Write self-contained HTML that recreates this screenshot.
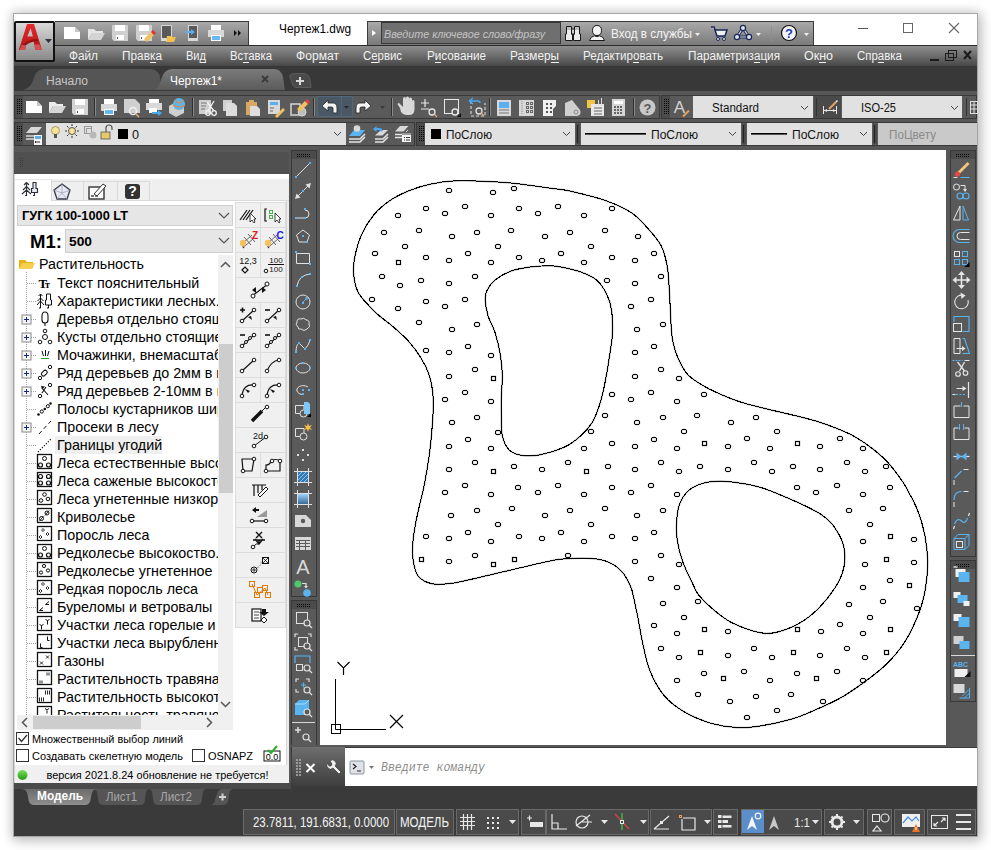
<!DOCTYPE html><html><head><meta charset="utf-8"><style>
*{margin:0;padding:0}
html,body{width:991px;height:850px;overflow:hidden;background:#fff;font-family:"Liberation Sans",sans-serif}
#sh{position:absolute;left:13px;top:13px;width:965px;height:824px;background:#3c3c3c;box-shadow:0 0 10px 2px rgba(0,0,0,0.16),3px 4px 12px 1px rgba(0,0,0,0.14);border:1px solid #a6a6a6;box-sizing:border-box}
</style></head><body><div id="sh"></div><svg width="991" height="850" viewBox="0 0 991 850" style="position:absolute;left:0;top:0"><defs><linearGradient id="g1" x1="0" y1="0" x2="0" y2="1"><stop offset="0" stop-color="#ababab"/><stop offset="1" stop-color="#7a7a7a"/></linearGradient><linearGradient id="g2" x1="0" y1="0" x2="0" y2="1"><stop offset="0" stop-color="#ababab"/><stop offset="1" stop-color="#7a7a7a"/></linearGradient><linearGradient id="g3" x1="0" y1="0" x2="0" y2="1"><stop offset="0" stop-color="#929292"/><stop offset="0.55" stop-color="#6a6a6a"/><stop offset="1" stop-color="#474747"/></linearGradient><linearGradient id="g4" x1="0" y1="0" x2="0" y2="1"><stop offset="0" stop-color="#7b7b7b"/><stop offset="1" stop-color="#5a5a5a"/></linearGradient><linearGradient id="g5" x1="0" y1="0" x2="0" y2="1"><stop offset="0" stop-color="#d9d9d9"/><stop offset="1" stop-color="#8a8a8a"/></linearGradient><linearGradient id="g6" x1="0" y1="0" x2="0" y2="1"><stop offset="0" stop-color="#e42a2a"/><stop offset="0.6" stop-color="#c81e1e"/><stop offset="1" stop-color="#b01515"/></linearGradient><linearGradient id="g7" x1="0" y1="0" x2="0" y2="1"><stop offset="0" stop-color="#7ee060"/><stop offset="1" stop-color="#1f9a10"/></linearGradient><linearGradient id="g8" x1="0" y1="0" x2="0" y2="1"><stop offset="0" stop-color="#9ad4f8"/><stop offset="1" stop-color="#3a6a98"/></linearGradient><linearGradient id="g9" x1="0" y1="0" x2="0" y2="1"><stop offset="0" stop-color="#6e6e6e"/><stop offset="1" stop-color="#3e3e3e"/></linearGradient><linearGradient id="g10" x1="0" y1="0" x2="0" y2="1"><stop offset="0" stop-color="#6c6c6c"/><stop offset="1" stop-color="#8e8e8e"/></linearGradient></defs><rect x="14" y="14" width="963" height="31" fill="#ffffff" /><rect x="55" y="21" width="194" height="24" fill="url(#g1)" /><line x1="55" y1="21.5" x2="249" y2="21.5" stroke="#3a3a3a" stroke-width="1"/><line x1="248.5" y1="21" x2="248.5" y2="45" stroke="#3a3a3a" stroke-width="1"/><path d="M64 27 H75 L80 32 V39 H64 Z" fill="#ffffff" stroke="none" stroke-width="1" /><path d="M75 27 L80 32 H75 Z" fill="#c8c8c8" stroke="none" stroke-width="1" /><path d="M88 29 H94 L96 31 H103 V33 H92 L88 40 Z" fill="#e6e6e6" stroke="none" stroke-width="1" /><path d="M92 33 H105 L101 40 H88 Z" fill="#d4d4d4" stroke="none" stroke-width="1" /><path d="M112 25 H128 V41 H114 L112 39 Z" fill="#d0d0d0" stroke="none" stroke-width="1" /><rect x="115" y="25" width="10" height="6" fill="#ffffff" /><rect x="116" y="35" width="8" height="5" fill="#ffffff" /><rect x="117" y="37" width="1" height="2" fill="#555" /><path d="M136 25 H152 V41 H138 L136 39 Z" fill="#d0d0d0" stroke="none" stroke-width="1" /><rect x="139" y="25" width="10" height="6" fill="#ffffff" /><rect x="140" y="35" width="8" height="5" fill="#ffffff" /><rect x="141" y="37" width="1" height="2" fill="#555" /><path d="M144 39 L151 32 L154 35 L147 42 Z" fill="#f0c060" stroke="none" stroke-width="1" /><path d="M151 32 L153 30 L156 33 L154 35 Z" fill="#e03030" stroke="none" stroke-width="1" /><path d="M161 25 h10 a1 1 0 0 1 1 1 v15 h-11 z" fill="#d8d8d8" stroke="none" stroke-width="1" /><rect x="162" y="26" width="9" height="12" fill="#5a5a5a" /><path d="M167 36 h4 l1 1 h4 l-2 5 h-8 z" fill="#f0c050" stroke="none" stroke-width="1" /><path d="M188 25 h10 v16 h-10 z" fill="#d8d8d8" stroke="none" stroke-width="1" /><rect x="189" y="26" width="8" height="12" fill="#5a5a5a" /><path d="M185 31 h6 v-2 l4 3 l-4 3 v-2 h-6 z" fill="#5ab0f0" stroke="none" stroke-width="1" /><rect x="211" y="25" width="10" height="5" fill="#ffffff" /><rect x="208" y="30" width="16" height="7" fill="#d8d8d8" /><rect x="211" y="35" width="10" height="6" fill="#ffffff" /><rect x="212" y="36" width="8" height="4" fill="#66b8f0" /><path d="M234 30 l3 3 l-3 3 z M238 30 l3 3 l-3 3 z" fill="#111" stroke="none" stroke-width="1" /><text x="279" y="33" font-family="Liberation Sans" font-size="12" fill="#000" font-weight="normal" font-style="normal" text-anchor="start" textLength="72" lengthAdjust="spacingAndGlyphs" >Чертеж1.dwg</text><rect x="367" y="21" width="447" height="24" fill="url(#g2)" /><line x1="367" y1="21.5" x2="814" y2="21.5" stroke="#3a3a3a" stroke-width="1"/><line x1="367.5" y1="21" x2="367.5" y2="45" stroke="#3a3a3a" stroke-width="1"/><line x1="813.5" y1="21" x2="813.5" y2="45" stroke="#3a3a3a" stroke-width="1"/><path d="M372 30 L376 33 L372 36 Z" fill="#ffffff" stroke="none" stroke-width="1" /><rect x="381" y="22" width="180" height="22" fill="#383838" /><rect x="382" y="23" width="178" height="20" fill="#6f6f6f" /><text x="384" y="38" font-family="Liberation Sans" font-size="11.5" fill="#c4c4c4" font-weight="normal" font-style="italic" text-anchor="start" textLength="161" lengthAdjust="spacingAndGlyphs" >Введите ключевое слово/фразу</text><path d="M566.5 26.5 H571.5 V34 H572.5 V40.5 H565.5 V34 H566.5 Z" fill="#ececec" stroke="#1a1a1a" stroke-width="1" /><path d="M574.5 26.5 H579.5 V34 H580.5 V40.5 H573.5 V34 H574.5 Z" fill="#ececec" stroke="#1a1a1a" stroke-width="1" /><rect x="571.5" y="29" width="3" height="5" fill="#cfcfcf" stroke="#1a1a1a" stroke-width="1"/><rect x="567" y="27" width="4" height="3" fill="#bdbdbd" /><rect x="575" y="27" width="4" height="3" fill="#bdbdbd" /><path d="M597 25.5 Q601.5 25.5 601.5 30.5 Q601.5 35.5 597 35.5 Q592.5 35.5 592.5 30.5 Q592.5 25.5 597 25.5 Z" fill="#f4f4f4" stroke="#1a1a1a" stroke-width="1" /><path d="M589.5 40.5 Q590.5 36.5 594.5 35.8 Q597 37.5 599.5 35.8 Q603.5 36.5 604.5 40.5 Z" fill="#f4f4f4" stroke="#1a1a1a" stroke-width="1" /><text x="611" y="38" font-family="Liberation Sans" font-size="12" fill="#f4f4f4" font-weight="normal" font-style="normal" text-anchor="start" textLength="81" lengthAdjust="spacingAndGlyphs" >Вход в службы</text><path d="M695 33 h5 l-2.5 3 z" fill="#f0f0f0" stroke="none" stroke-width="1" /><path d="M711 27 h3 l3 9 h8 l2 -6 h-12" fill="#f0f0f0" stroke="#17275a" stroke-width="1.5" /><circle cx="718" cy="39" r="1.5" fill="#f0f0f0" stroke="#17275a" stroke-width="1" /><circle cx="724" cy="39" r="1.5" fill="#f0f0f0" stroke="#17275a" stroke-width="1" /><path d="M743 28 L749 37 H737 Z" fill="none" stroke="#17275a" stroke-width="3" /><path d="M743 28 L749 37 H737 Z" fill="none" stroke="#e0e0e0" stroke-width="1.2" /><circle cx="743" cy="28" r="2.6" fill="#e0e0e0" stroke="#17275a" stroke-width="1.2" /><circle cx="737" cy="37" r="2.6" fill="#e0e0e0" stroke="#17275a" stroke-width="1.2" /><circle cx="749" cy="37" r="2.6" fill="#e0e0e0" stroke="#17275a" stroke-width="1.2" /><path d="M756 33 h5 l-2.5 3 z" fill="#f0f0f0" stroke="none" stroke-width="1" /><line x1="771.5" y1="26" x2="771.5" y2="42" stroke="#8e8e8e" stroke-width="1"/><circle cx="789" cy="33" r="7.5" fill="#f4f4f4" stroke="#111" stroke-width="1.2" /><text x="789" y="38" font-family="Liberation Sans" font-size="13" fill="#1a3fbf" font-weight="bold" font-style="normal" text-anchor="middle" >?</text><path d="M804 33 h5 l-2.5 3 z" fill="#f0f0f0" stroke="none" stroke-width="1" /><line x1="858" y1="28.5" x2="868" y2="28.5" stroke="#555" stroke-width="1"/><rect x="903.5" y="23.5" width="9" height="9" fill="none" stroke="#666" stroke-width="1" /><path d="M949 23 L959 33 M959 23 L949 33" fill="none" stroke="#666" stroke-width="1.1" /><rect x="14" y="45" width="963" height="21" fill="url(#g3)" /><line x1="14" y1="45.5" x2="977" y2="45.5" stroke="#2b2b2b" stroke-width="1"/><text x="69" y="60" font-family="Liberation Sans" font-size="12" fill="#f2f2f2" font-weight="normal" font-style="normal" text-anchor="start" textLength="29" lengthAdjust="spacingAndGlyphs" >Файл</text><text x="122" y="60" font-family="Liberation Sans" font-size="12" fill="#f2f2f2" font-weight="normal" font-style="normal" text-anchor="start" textLength="40" lengthAdjust="spacingAndGlyphs" >Правка</text><text x="186" y="60" font-family="Liberation Sans" font-size="12" fill="#f2f2f2" font-weight="normal" font-style="normal" text-anchor="start" textLength="20" lengthAdjust="spacingAndGlyphs" >Вид</text><text x="230" y="60" font-family="Liberation Sans" font-size="12" fill="#f2f2f2" font-weight="normal" font-style="normal" text-anchor="start" textLength="42" lengthAdjust="spacingAndGlyphs" >Вставка</text><text x="296" y="60" font-family="Liberation Sans" font-size="12" fill="#f2f2f2" font-weight="normal" font-style="normal" text-anchor="start" textLength="43" lengthAdjust="spacingAndGlyphs" >Формат</text><text x="363" y="60" font-family="Liberation Sans" font-size="12" fill="#f2f2f2" font-weight="normal" font-style="normal" text-anchor="start" textLength="39" lengthAdjust="spacingAndGlyphs" >Сервис</text><text x="427" y="60" font-family="Liberation Sans" font-size="12" fill="#f2f2f2" font-weight="normal" font-style="normal" text-anchor="start" textLength="59" lengthAdjust="spacingAndGlyphs" >Рисование</text><text x="510" y="60" font-family="Liberation Sans" font-size="12" fill="#f2f2f2" font-weight="normal" font-style="normal" text-anchor="start" textLength="49" lengthAdjust="spacingAndGlyphs" >Размеры</text><text x="583" y="60" font-family="Liberation Sans" font-size="12" fill="#f2f2f2" font-weight="normal" font-style="normal" text-anchor="start" textLength="80" lengthAdjust="spacingAndGlyphs" >Редактировать</text><text x="688" y="60" font-family="Liberation Sans" font-size="12" fill="#f2f2f2" font-weight="normal" font-style="normal" text-anchor="start" textLength="92" lengthAdjust="spacingAndGlyphs" >Параметризация</text><text x="804" y="60" font-family="Liberation Sans" font-size="12" fill="#f2f2f2" font-weight="normal" font-style="normal" text-anchor="start" textLength="29" lengthAdjust="spacingAndGlyphs" >Окно</text><text x="857" y="60" font-family="Liberation Sans" font-size="12" fill="#f2f2f2" font-weight="normal" font-style="normal" text-anchor="start" textLength="45" lengthAdjust="spacingAndGlyphs" >Справка</text><line x1="69" y1="62.5" x2="78" y2="62.5" stroke="#f2f2f2" stroke-width="1"/><line x1="150" y1="62.5" x2="156" y2="62.5" stroke="#f2f2f2" stroke-width="1"/><line x1="200" y1="62.5" x2="206" y2="62.5" stroke="#f2f2f2" stroke-width="1"/><line x1="243" y1="62.5" x2="249" y2="62.5" stroke="#f2f2f2" stroke-width="1"/><line x1="319" y1="62.5" x2="327" y2="62.5" stroke="#f2f2f2" stroke-width="1"/><line x1="371" y1="62.5" x2="378" y2="62.5" stroke="#f2f2f2" stroke-width="1"/><line x1="435" y1="62.5" x2="441" y2="62.5" stroke="#f2f2f2" stroke-width="1"/><line x1="551" y1="62.5" x2="559" y2="62.5" stroke="#f2f2f2" stroke-width="1"/><line x1="633" y1="62.5" x2="639" y2="62.5" stroke="#f2f2f2" stroke-width="1"/><line x1="754" y1="62.5" x2="760" y2="62.5" stroke="#f2f2f2" stroke-width="1"/><line x1="819" y1="62.5" x2="826" y2="62.5" stroke="#f2f2f2" stroke-width="1"/><line x1="878" y1="62.5" x2="884" y2="62.5" stroke="#f2f2f2" stroke-width="1"/><rect x="930" y="59" width="9" height="2" fill="#1a1a1a" /><rect x="945.5" y="53.5" width="8" height="7" fill="none" stroke="#1a1a1a" stroke-width="1" /><rect x="948.5" y="50.5" width="8" height="7" fill="none" stroke="#1a1a1a" stroke-width="1" /><path d="M964 51 L971 59 M971 51 L964 59" fill="none" stroke="#1a1a1a" stroke-width="2" /><rect x="14" y="66" width="963" height="25" fill="#383838" /><rect x="14" y="91" width="963" height="3" fill="#515151" /><line x1="14" y1="94.5" x2="977" y2="94.5" stroke="#2e2e2e" stroke-width="1"/><path d="M15 91 Q30 91 33 80 Q36 69 44 69 H150 Q158 69 160 77 L162 91 Z" fill="#555555" stroke="none" stroke-width="1" /><text x="46" y="85" font-family="Liberation Sans" font-size="12" fill="#c6c6c6" font-weight="normal" font-style="normal" text-anchor="start" textLength="42" lengthAdjust="spacingAndGlyphs" >Начало</text><path d="M150 91 Q158 91 161 80 Q164 69 172 69 H274 Q281 69 283 77 L285 91 Z" fill="url(#g4)" stroke="none" stroke-width="1" /><rect x="150" y="90" width="136" height="4" fill="#5a5a5a" /><text x="170" y="85" font-family="Liberation Sans" font-size="12" fill="#ffffff" font-weight="normal" font-style="normal" text-anchor="start" textLength="52" lengthAdjust="spacingAndGlyphs" >Чертеж1*</text><path d="M262 76 L268 82 M268 76 L262 82" fill="none" stroke="#3a3a3a" stroke-width="1.8" /><path d="M289.5 75.5 Q291 73.5 296 73.5 H303 Q309 73.5 310 80 L311 87.5 H297 Q293 87.5 292 83 Z" fill="#4a4a4a" stroke="#5c5c5c" stroke-width="1" /><path d="M300 77 V85 M296 81 H304" fill="none" stroke="#d8d8d8" stroke-width="2" /><rect x="14" y="21" width="41" height="41" fill="#111" rx="2"/><rect x="16" y="23" width="37" height="37" fill="url(#g5)" /><path d="M27 24 H34 L42 50 H35.4 L33.7 41.5 Q29 41.8 25.9 45 L25.3 50 H18.8 Z M30.6 28.2 L32.9 36.6 H27.3 Z" fill="url(#g6)" stroke="none" stroke-width="1" fill-rule="evenodd"/><path d="M21 46.5 Q28 38.5 37.8 39 L38.3 41.2 Q29.5 40.8 22 48.5 Z" fill="#8a1010" stroke="none" stroke-width="1" opacity="0.75"/><path d="M19.5 50 L21.5 45 H25.8 L25.3 50 Z M35.6 50 L34.4 44.5 H39.6 L42 50 Z" fill="#e87878" stroke="none" stroke-width="1" opacity="0.6"/><path d="M45 39 H52 L48.5 43 Z" fill="#2a3440" stroke="none" stroke-width="1" /><rect x="14" y="90" width="963" height="60" fill="#575757" /><line x1="14" y1="90.5" x2="977" y2="90.5" stroke="#3a3a3a" stroke-width="1"/><rect x="14" y="95" width="646" height="24" fill="#383838" /><rect x="15" y="96" width="644" height="22" fill="#5a5a5a" /><rect x="15" y="96" width="8" height="22" fill="#4b4b4b" /><path d="M17 99h1v1h-1zM19 99h1v1h-1zM21 99h1v1h-1zM17 101h1v1h-1zM19 101h1v1h-1zM21 101h1v1h-1zM17 103h1v1h-1zM19 103h1v1h-1zM21 103h1v1h-1zM17 105h1v1h-1zM19 105h1v1h-1zM21 105h1v1h-1zM17 107h1v1h-1zM19 107h1v1h-1zM21 107h1v1h-1zM17 109h1v1h-1zM19 109h1v1h-1zM21 109h1v1h-1zM17 111h1v1h-1zM19 111h1v1h-1zM21 111h1v1h-1zM17 113h1v1h-1zM19 113h1v1h-1zM21 113h1v1h-1z" fill="#050505" stroke="none" stroke-width="1" /><path d="M26 101 H37 L42 106 V113 H26 Z" fill="#ffffff" stroke="none" stroke-width="1" /><path d="M37 101 L42 106 H37 Z" fill="#c8c8c8" stroke="none" stroke-width="1" /><path d="M49 102 H55 L57 104 H63 V106 H53 L49 113 Z" fill="#ececec" stroke="none" stroke-width="1" /><path d="M53 106 H66 L62 113 H49 Z" fill="#d6d6d6" stroke="none" stroke-width="1" /><path d="M72 99 H88 V115 H74 L72 113 Z" fill="#d4d4d4" stroke="none" stroke-width="1" /><rect x="75" y="99" width="10" height="6" fill="#ffffff" /><rect x="76" y="109" width="8" height="5" fill="#ffffff" /><rect x="77" y="111" width="1" height="2" fill="#555" /><line x1="94.5" y1="98" x2="94.5" y2="116" stroke="#2e2e2e" stroke-width="1"/><line x1="95.5" y1="98" x2="95.5" y2="116" stroke="#8a8a8a" stroke-width="1"/><rect x="104" y="99" width="10" height="5" fill="#ffffff" /><rect x="101" y="104" width="16" height="7" fill="#d8d8d8" /><rect x="104" y="109" width="10" height="6" fill="#ffffff" /><rect x="105" y="110" width="8" height="4" fill="#66b8f0" /><path d="M124 99 H135 L140 104 V113 H124 Z" fill="#d0d0d0" stroke="none" stroke-width="1" /><circle cx="133" cy="111" r="3.5" fill="none" stroke="#f0f0f0" stroke-width="1.5" /><path d="M135.5 113.5 L139 117" fill="none" stroke="#e0b080" stroke-width="1.5" /><rect x="149" y="99" width="10" height="4" fill="#ffffff" /><rect x="146" y="103" width="16" height="7" fill="#d8d8d8" /><rect x="149" y="108" width="8" height="5" fill="#ffffff" /><path d="M152 112 h6 v-2 l4 3 l-4 3 v-2 h-6 z" fill="#4aa8f0" stroke="none" stroke-width="1" /><path d="M169 106 L176 102 L184 106 V113 L176 117 L169 113 Z" fill="#cfcfcf" stroke="none" stroke-width="1" /><circle cx="179" cy="104" r="6" fill="#5ab5e8" stroke="none" stroke-width="1" /><path d="M175 100 Q179 106 183 100 M173 105 Q179 109 185 105" fill="none" stroke="#f08040" stroke-width="1.2" /><line x1="192.5" y1="98" x2="192.5" y2="116" stroke="#2e2e2e" stroke-width="1"/><line x1="193.5" y1="98" x2="193.5" y2="116" stroke="#8a8a8a" stroke-width="1"/><rect x="199" y="100" width="12" height="14" fill="#d0d0d0" /><path d="M201 103h7M201 106h5M201 109h4" fill="none" stroke="#777" stroke-width="1" /><circle cx="208" cy="113" r="2.3" fill="none" stroke="#f4f4f4" stroke-width="1.3" /><circle cx="214" cy="113" r="2.3" fill="none" stroke="#f4f4f4" stroke-width="1.3" /><path d="M208 111 L214 101 M214 111 L207 102" fill="none" stroke="#f4f4f4" stroke-width="1.3" /><rect x="223" y="100" width="9" height="11" fill="#cfcfcf" /><path d="M226 103 H234 L237 106 V116 H226 Z" fill="#dcdcdc" stroke="none" stroke-width="1" /><rect x="246" y="102" width="11" height="13" fill="#d9a860" /><rect x="249" y="100" width="5" height="3" fill="#d9a860" /><path d="M250 106 H257 L260 109 V116 H250 Z" fill="#dedede" stroke="none" stroke-width="1" /><rect x="268" y="100" width="12" height="14" fill="#d8d8d8" /><rect x="270" y="102" width="8" height="3" fill="#5ab0f0" /><path d="M270 108h4M270 111h3" fill="none" stroke="#666" stroke-width="1" /><path d="M275 116 L283 108 L285 110 L277 118 Z" fill="#f2c060" stroke="none" stroke-width="1" /><path d="M291 104 H300 V115 H291 Z" fill="none" stroke="#d6d6d6" stroke-width="1.5" /><circle cx="302" cy="112" r="4" fill="#bdbdbd" stroke="#d8d8d8" stroke-width="1" /><path d="M297 109 L305 101 L308 104 L300 112 Z" fill="#f2c060" stroke="none" stroke-width="1" /><path d="M305 101 L307 99 L310 102 L308 104Z" fill="#e04040" stroke="none" stroke-width="1" /><line x1="313.5" y1="98" x2="313.5" y2="116" stroke="#2e2e2e" stroke-width="1"/><line x1="314.5" y1="98" x2="314.5" y2="116" stroke="#8a8a8a" stroke-width="1"/><rect x="317" y="96" width="36" height="21" fill="#52667a" /><rect x="318" y="97" width="34" height="19" fill="#4a5866" /><line x1="341.5" y1="97" x2="341.5" y2="116" stroke="#52667a" stroke-width="1"/><path d="M322 106 L328 100 V103 H333 Q337 103 337 108 V113 H333 V108 Q333 107 331 107 H328 V111 Z" fill="#f4f4f4" stroke="#222" stroke-width="0.8" /><path d="M344 106 h5 l-2.5 3 z" fill="#2a2a2a" stroke="none" stroke-width="1" /><path d="M371 106 L365 100 V103 H360 Q356 103 356 108 V113 H360 V108 Q360 107 362 107 H365 V111 Z" fill="#f4f4f4" stroke="#222" stroke-width="0.8" /><path d="M380 106 h5 l-2.5 3 z" fill="#3a3a3a" stroke="none" stroke-width="1" /><line x1="391.5" y1="98" x2="391.5" y2="116" stroke="#2e2e2e" stroke-width="1"/><line x1="392.5" y1="98" x2="392.5" y2="116" stroke="#8a8a8a" stroke-width="1"/><path d="M400 108 L398 105 Q397 103 399 103 L403 107 V99 Q403 97 404.5 97 Q406 97 406 99 V105 V98 Q406 96.5 407.5 96.5 Q409 96.5 409 98 V105 V99 Q409 97.5 410.5 97.5 Q412 97.5 412 99 V106 V101 Q412 100 413 100 Q414.5 100 414.5 101.5 V109 Q414.5 115 409 115 H406 Q403 115 401 112 Z" fill="#d8d8d8" stroke="none" stroke-width="1" /><path d="M421 103 H429 M425 99 V107 M421 109 H429" fill="none" stroke="#e8e8e8" stroke-width="1.2" /><circle cx="432" cy="112" r="3" fill="none" stroke="#e8e8e8" stroke-width="1.3" /><path d="M434 114 L437 117" fill="none" stroke="#e0b080" stroke-width="1.3" /><rect x="444.5" y="99.5" width="14" height="14" fill="none" stroke="#e8e8e8" stroke-width="1" /><circle cx="455" cy="112" r="3" fill="#5a5a5a" stroke="#e8e8e8" stroke-width="1.3" /><path d="M457 117 L461 113 V117 Z" fill="#111" stroke="none" stroke-width="1" /><path d="M471 101 V116 H485 V103" fill="none" stroke="#d0d0d0" stroke-width="1.2" stroke-dasharray="3 2"/><path d="M469 101 L473 98 M469 101 L473 104 M469 101 H478 Q480 101 480 103" fill="none" stroke="#4aa8f0" stroke-width="1.5" /><circle cx="479" cy="111" r="3" fill="#5a5a5a" stroke="#e0e0e0" stroke-width="1.3" /><path d="M481 113 L484 116" fill="none" stroke="#e0b080" stroke-width="1.3" /><line x1="489.5" y1="98" x2="489.5" y2="116" stroke="#2e2e2e" stroke-width="1"/><line x1="490.5" y1="98" x2="490.5" y2="116" stroke="#8a8a8a" stroke-width="1"/><rect x="497" y="100" width="14" height="16" fill="#d8d8d8" /><rect x="499" y="102" width="10" height="6" fill="#5ab0f0" /><path d="M499 110h10M499 113h10" fill="none" stroke="#777" stroke-width="1" /><rect x="519" y="100" width="15" height="16" fill="#d8d8d8" /><path d="M522 101v14" fill="none" stroke="#888" stroke-width="1" stroke-dasharray="1 1"/><rect x="526.5" y="102.5" width="2" height="2" fill="none" stroke="#666" stroke-width="1" /><rect x="530.5" y="102.5" width="2" height="2" fill="none" stroke="#666" stroke-width="1" /><rect x="526.5" y="106.5" width="2" height="2" fill="none" stroke="#666" stroke-width="1" /><rect x="530.5" y="106.5" width="2" height="2" fill="none" stroke="#666" stroke-width="1" /><rect x="526.5" y="110.5" width="2" height="2" fill="none" stroke="#666" stroke-width="1" /><rect x="530.5" y="110.5" width="2" height="2" fill="none" stroke="#666" stroke-width="1" /><path d="M543 100 H556 V106 L553 109 V116 H543 Z" fill="#f0f0f0" stroke="none" stroke-width="1" /><rect x="546" y="103" width="2" height="2" fill="#555" /><rect x="550" y="103" width="2" height="2" fill="#555" /><rect x="546" y="107" width="2" height="2" fill="#555" /><rect x="550" y="107" width="2" height="2" fill="#555" /><rect x="546" y="111" width="2" height="2" fill="#555" /><rect x="550" y="111" width="2" height="2" fill="#555" /><path d="M565 103 L572 100 L580 110 Q582 115 577 116 H565 Z" fill="#d0d0d0" stroke="none" stroke-width="1" /><circle cx="576" cy="112" r="2" fill="none" stroke="#888" stroke-width="1" /><rect x="587" y="100" width="8" height="8" fill="#f2c444" /><rect x="591" y="104" width="13" height="12" fill="#e8e8e8" /><path d="M594 108h8M594 111h8M594 114h8" fill="none" stroke="#666" stroke-width="1" /><rect x="598" y="100" width="1" height="5" fill="#d8d8d8" /><rect x="601" y="98" width="1" height="7" fill="#d8d8d8" /><rect x="612" y="99" width="13" height="17" fill="#d6d6d6" /><rect x="614" y="101" width="9" height="3" fill="#fff" /><rect x="614" y="106" width="2" height="2" fill="#666" /><rect x="617" y="106" width="2" height="2" fill="#666" /><rect x="620" y="106" width="2" height="2" fill="#666" /><rect x="614" y="109" width="2" height="2" fill="#666" /><rect x="617" y="109" width="2" height="2" fill="#666" /><rect x="620" y="109" width="2" height="2" fill="#666" /><rect x="614" y="112" width="2" height="2" fill="#666" /><rect x="617" y="112" width="2" height="2" fill="#666" /><rect x="620" y="112" width="2" height="2" fill="#666" /><line x1="633.5" y1="98" x2="633.5" y2="116" stroke="#2e2e2e" stroke-width="1"/><line x1="634.5" y1="98" x2="634.5" y2="116" stroke="#8a8a8a" stroke-width="1"/><circle cx="647.5" cy="107.5" r="8" fill="#c8c8c8" stroke="none" stroke-width="1" /><text x="647.5" y="113" font-family="Liberation Sans" font-size="13" fill="#5a5a5a" font-weight="bold" font-style="normal" text-anchor="middle" >?</text><rect x="661" y="95" width="316" height="24" fill="#383838" /><rect x="662" y="96" width="314" height="22" fill="#5a5a5a" /><rect x="662" y="96" width="8" height="22" fill="#4b4b4b" /><path d="M664 99h1v1h-1zM666 99h1v1h-1zM668 99h1v1h-1zM664 101h1v1h-1zM666 101h1v1h-1zM668 101h1v1h-1zM664 103h1v1h-1zM666 103h1v1h-1zM668 103h1v1h-1zM664 105h1v1h-1zM666 105h1v1h-1zM668 105h1v1h-1zM664 107h1v1h-1zM666 107h1v1h-1zM668 107h1v1h-1zM664 109h1v1h-1zM666 109h1v1h-1zM668 109h1v1h-1zM664 111h1v1h-1zM666 111h1v1h-1zM668 111h1v1h-1zM664 113h1v1h-1zM666 113h1v1h-1zM668 113h1v1h-1z" fill="#050505" stroke="none" stroke-width="1" /><text x="679.5" y="113" font-family="Liberation Sans" font-size="17" fill="#d4d4d4" font-weight="normal" font-style="normal" text-anchor="middle" >A</text><path d="M683 116.5 L689 110.5" fill="none" stroke="#e0a060" stroke-width="2" /><rect x="693" y="96" width="120" height="22" fill="#e1e1e1" /><text x="712" y="112" font-family="Liberation Sans" font-size="12" fill="#111" font-weight="normal" font-style="normal" text-anchor="start" textLength="47" lengthAdjust="spacingAndGlyphs" >Standard</text><path d="M801 106 l3.5 3.5 l3.5 -3.5" fill="none" stroke="#444" stroke-width="1" /><rect x="814" y="96" width="6" height="22" fill="#4a4a4a" /><line x1="816.5" y1="98" x2="816.5" y2="116" stroke="#333" stroke-width="1"/><rect x="820" y="96" width="21" height="22" fill="#4a4a4a" /><path d="M823.5 106v8M836.5 106v8M824 110.5h12" fill="none" stroke="#e8e8e8" stroke-width="1" /><path d="M824 110.5 l3 -1.5 v3 z M836 110.5 l-3 -1.5 v3 z" fill="#e8e8e8" stroke="none" stroke-width="1" /><path d="M829 109 L836 102" fill="none" stroke="#e0a060" stroke-width="2.2" /><path d="M836 102 l1.5 -1.5" fill="none" stroke="#f0f0f0" stroke-width="1.5" /><rect x="842" y="96" width="120" height="22" fill="#e1e1e1" /><text x="861" y="112" font-family="Liberation Sans" font-size="12" fill="#111" font-weight="normal" font-style="normal" text-anchor="start" textLength="35" lengthAdjust="spacingAndGlyphs" >ISO-25</text><path d="M951 106 l3.5 3.5 l3.5 -3.5" fill="none" stroke="#444" stroke-width="1" /><line x1="966.5" y1="98" x2="966.5" y2="116" stroke="#333" stroke-width="1"/><rect x="970.5" y="101.5" width="7" height="12" fill="none" stroke="#dedede" stroke-width="1" /><path d="M970 105h8M970 109h8M974 101v13" fill="none" stroke="#dedede" stroke-width="1" /><rect x="14" y="122" width="401" height="24" fill="#383838" /><rect x="15" y="123" width="399" height="22" fill="#5a5a5a" /><rect x="15" y="123" width="8" height="22" fill="#4b4b4b" /><path d="M17 126h1v1h-1zM19 126h1v1h-1zM21 126h1v1h-1zM17 128h1v1h-1zM19 128h1v1h-1zM21 128h1v1h-1zM17 130h1v1h-1zM19 130h1v1h-1zM21 130h1v1h-1zM17 132h1v1h-1zM19 132h1v1h-1zM21 132h1v1h-1zM17 134h1v1h-1zM19 134h1v1h-1zM21 134h1v1h-1zM17 136h1v1h-1zM19 136h1v1h-1zM21 136h1v1h-1zM17 138h1v1h-1zM19 138h1v1h-1zM21 138h1v1h-1zM17 140h1v1h-1zM19 140h1v1h-1zM21 140h1v1h-1z" fill="#050505" stroke="none" stroke-width="1" /><path d="M26 133 L31 127 H42 L37 133 Z" fill="#d8d8d8" stroke="none" stroke-width="1" /><path d="M26 136h8M26 139h8" fill="none" stroke="#d8d8d8" stroke-width="1.5" /><rect x="34" y="135" width="8" height="10" fill="#f4f4f4" /><rect x="35" y="136" width="6" height="3" fill="#5ab0f0" /><path d="M36 142h4M36 141l-1 1l1 1" fill="none" stroke="#333" stroke-width="1" /><rect x="46" y="123" width="300" height="22" fill="#e1e1e1" /><circle cx="55.5" cy="130.5" r="4" fill="#f6e39a" stroke="#9a8a40" stroke-width="0.8" /><rect x="54" y="134" width="3" height="4" fill="#555" /><circle cx="72" cy="131" r="3.5" fill="#f6e39a" stroke="#333" stroke-width="0.8" /><path d="M72 124v2M72 136v2M65 131h2M77 131h2M67 126l1.5 1.5M75.5 134.5l1.5 1.5M77 126l-1.5 1.5M68.5 134.5l-1.5 1.5" fill="none" stroke="#333" stroke-width="1" /><rect x="84.5" y="126.5" width="7" height="7" fill="none" stroke="#9a9a9a" stroke-width="1" /><rect x="86.5" y="128.5" width="5" height="5" fill="none" stroke="#9a9a9a" stroke-width="1" /><circle cx="93" cy="135" r="3.5" fill="#b8b8b8" stroke="none" stroke-width="1" /><rect x="101" y="132" width="9" height="7" fill="#e4c86a" /><rect x="101" y="132" width="9" height="7" fill="none" stroke="#555" stroke-width="0.8"/><path d="M106 132 V128 Q106 125 109 125 Q112 125 112 128 V130" fill="none" stroke="#555" stroke-width="1.2" /><rect x="118" y="129" width="10" height="10" fill="#000" /><text x="132" y="139" font-family="Liberation Sans" font-size="13" fill="#111" font-weight="normal" font-style="normal" text-anchor="start" textLength="7" lengthAdjust="spacingAndGlyphs" >0</text><path d="M334 132 l3.5 3.5 l3.5 -3.5" fill="none" stroke="#444" stroke-width="1" /><path d="M349 136 L354 130 H365 L360 136 Z" fill="#5ab4f0" stroke="none" stroke-width="1" /><circle cx="357" cy="128.5" r="3.3" fill="#d8d8d8" stroke="none" stroke-width="1" /><path d="M349 139 H360 L365 134 M349 142 H360 L365 137" fill="none" stroke="#e4e4e4" stroke-width="1.6" /><path d="M375 135.5 L381 130 H388 L382.5 135.5 Z" fill="#d8d8d8" stroke="none" stroke-width="1" /><path d="M375 139 H383 L388 134 M375 142 H383 L388 137" fill="none" stroke="#e4e4e4" stroke-width="1.6" /><path d="M373 129 L376.5 126 V128 H379 Q382 128 383 131 L381 131.5 Q380 130 378.5 130 H376.5 V132 Z" fill="#4aa8f0" stroke="none" stroke-width="1" /><path d="M395 131.5 L400 126 H408.5 L403.5 131.5 Z" fill="#d8d8d8" stroke="none" stroke-width="1" /><path d="M395 134.5 H402 M395 137.5 H402" fill="none" stroke="#e4e4e4" stroke-width="1.6" /><path d="M406 128 l-3 3 M408 130 l-2 2" fill="none" stroke="#d8d8d8" stroke-width="1" /><rect x="402" y="133" width="9" height="9" fill="#f4f4f4" /><rect x="402" y="133" width="9" height="2" fill="#9a9a9a" /><path d="M404 137.5h1M406 137.5h4M404 140h1M406 140h4" fill="none" stroke="#333" stroke-width="1" /><rect x="416" y="122" width="561" height="24" fill="#383838" /><rect x="417" y="123" width="559" height="22" fill="#5a5a5a" /><rect x="417" y="123" width="8" height="22" fill="#4b4b4b" /><path d="M419 126h1v1h-1zM421 126h1v1h-1zM423 126h1v1h-1zM419 128h1v1h-1zM421 128h1v1h-1zM423 128h1v1h-1zM419 130h1v1h-1zM421 130h1v1h-1zM423 130h1v1h-1zM419 132h1v1h-1zM421 132h1v1h-1zM423 132h1v1h-1zM419 134h1v1h-1zM421 134h1v1h-1zM423 134h1v1h-1zM419 136h1v1h-1zM421 136h1v1h-1zM423 136h1v1h-1zM419 138h1v1h-1zM421 138h1v1h-1zM423 138h1v1h-1zM419 140h1v1h-1zM421 140h1v1h-1zM423 140h1v1h-1z" fill="#050505" stroke="none" stroke-width="1" /><rect x="425" y="123" width="150" height="22" fill="#e1e1e1" /><rect x="431" y="129" width="10" height="10" fill="#000" /><text x="446" y="139" font-family="Liberation Sans" font-size="12" fill="#111" font-weight="normal" font-style="normal" text-anchor="start" textLength="46" lengthAdjust="spacingAndGlyphs" >ПоСлою</text><path d="M563 132 l3.5 3.5 l3.5 -3.5" fill="none" stroke="#444" stroke-width="1" /><rect x="575" y="123" width="6" height="22" fill="#5a5a5a" /><rect x="576" y="124" width="4" height="20" fill="#4a4a4a" /><line x1="577.5" y1="125" x2="577.5" y2="143" stroke="#222" stroke-width="1"/><rect x="581" y="123" width="160" height="22" fill="#e1e1e1" /><rect x="585" y="133" width="61" height="1" fill="#000" /><rect x="585" y="134" width="61" height="1" fill="#555" /><text x="651" y="139" font-family="Liberation Sans" font-size="12" fill="#111" font-weight="normal" font-style="normal" text-anchor="start" textLength="47" lengthAdjust="spacingAndGlyphs" >ПоСлою</text><path d="M729 132 l3.5 3.5 l3.5 -3.5" fill="none" stroke="#444" stroke-width="1" /><rect x="741" y="123" width="6" height="22" fill="#5a5a5a" /><rect x="742" y="124" width="4" height="20" fill="#4a4a4a" /><line x1="743.5" y1="125" x2="743.5" y2="143" stroke="#222" stroke-width="1"/><rect x="747" y="123" width="125" height="22" fill="#e1e1e1" /><rect x="751" y="133" width="36" height="1" fill="#000" /><rect x="751" y="134" width="36" height="1" fill="#555" /><text x="792" y="139" font-family="Liberation Sans" font-size="12" fill="#111" font-weight="normal" font-style="normal" text-anchor="start" textLength="47" lengthAdjust="spacingAndGlyphs" >ПоСлою</text><path d="M860 132 l3.5 3.5 l3.5 -3.5" fill="none" stroke="#444" stroke-width="1" /><rect x="872" y="123" width="6" height="22" fill="#5a5a5a" /><rect x="873" y="124" width="4" height="20" fill="#4a4a4a" /><line x1="874.5" y1="125" x2="874.5" y2="143" stroke="#222" stroke-width="1"/><rect x="878" y="123" width="99" height="22" fill="#c9c9c9" /><text x="889" y="139" font-family="Liberation Sans" font-size="12" fill="#8a8a8a" font-weight="normal" font-style="normal" text-anchor="start" textLength="47" lengthAdjust="spacingAndGlyphs" >ПоЦвету</text><rect x="14" y="150" width="276" height="636" fill="#585858" /><path d="M14 152 H286 Q289 152 289 155 V174 H14 Z" fill="#505050" stroke="none" stroke-width="1" /><path d="M20 158h1v1h-1zM22 158h1v1h-1zM20 160h1v1h-1zM22 160h1v1h-1zM20 162h1v1h-1zM22 162h1v1h-1zM20 164h1v1h-1zM22 164h1v1h-1zM20 166h1v1h-1zM22 166h1v1h-1z" fill="#3a3a3a" stroke="none" stroke-width="1" /><rect x="14" y="174" width="275" height="609" fill="#ffffff" /><line x1="14.5" y1="174" x2="14.5" y2="783" stroke="#d8d8d8" stroke-width="1"/><rect x="286" y="179" width="3" height="604" fill="#ececec" /><line x1="286.5" y1="200" x2="286.5" y2="783" stroke="#d4d4d4" stroke-width="1"/><rect x="51" y="179" width="237" height="21" fill="#efefef" /><line x1="51" y1="181.5" x2="150" y2="181.5" stroke="#dadada" stroke-width="1"/><line x1="83.5" y1="181" x2="83.5" y2="200" stroke="#dadada" stroke-width="1"/><line x1="117.5" y1="181" x2="117.5" y2="200" stroke="#dadada" stroke-width="1"/><line x1="149.5" y1="181" x2="149.5" y2="200" stroke="#dadada" stroke-width="1"/><line x1="51" y1="200.5" x2="289" y2="200.5" stroke="#dadada" stroke-width="1"/><rect x="15" y="179" width="36" height="22" fill="#ffffff" /><line x1="15" y1="179.5" x2="51" y2="179.5" stroke="#e6e6e6" stroke-width="1"/><line x1="51.5" y1="179" x2="51.5" y2="200" stroke="#dadada" stroke-width="1"/><path d="M26.5 182.5 V195.5 H25 M26.5 182.5 L24 185 M26.5 182.5 L29 185 M26.5 186.5 L23 190 M26.5 186.5 L30 190 M26.5 190 L22 194 M26.5 190 L31 194" fill="none" stroke="#2a2e36" stroke-width="1.1" /><path d="M33 182.5 H36 V188.5 H37.5 V192.5 H31.5 V188.5 H33 Z" fill="#e6e8ee" stroke="#2a2e36" stroke-width="1.1" /><path d="M34.5 192.5 V195.5 H33" fill="none" stroke="#2a2e36" stroke-width="1.1" /><path d="M62 184 L70 190 L67 199 H57 L54 190 Z" fill="#e8e8f0" stroke="#3a3a4a" stroke-width="1.3" /><path d="M62 184 V193 L57 199 M62 193 L67 199 M54 190 L62 193 L70 190" fill="none" stroke="#9aa0b8" stroke-width="0.7" /><rect x="89" y="187" width="15" height="12" fill="#ffffff" stroke="#333" stroke-width="1.4"/><path d="M91 195h3v2h-3zM95 195h3v2h-3z" fill="#777" stroke="none" stroke-width="1" /><path d="M94 194 L103 184 L106 186 L97 196 Z" fill="#fff" stroke="#333" stroke-width="1" /><rect x="125" y="184" width="15" height="15" fill="#333" rx="3"/><text x="132.5" y="196" font-family="Liberation Sans" font-size="14" fill="#ffffff" font-weight="bold" font-style="normal" text-anchor="middle" >?</text><rect x="17" y="205" width="216" height="21" fill="#cfcfcf" /><rect x="18" y="206" width="214" height="19" fill="#e6e6e6" /><text x="22" y="220" font-family="Liberation Sans" font-size="13" fill="#000" font-weight="bold" font-style="normal" text-anchor="start" textLength="106" lengthAdjust="spacingAndGlyphs" >ГУГК 100-1000 LT</text><path d="M219 213 l5 5 l5 -5" fill="none" stroke="#555" stroke-width="1.2" /><text x="30" y="248" font-family="Liberation Sans" font-size="19" fill="#000" font-weight="bold" font-style="normal" text-anchor="start" textLength="32" lengthAdjust="spacingAndGlyphs" >М1:</text><rect x="65" y="229" width="168" height="24" fill="#cfcfcf" /><rect x="66" y="230" width="166" height="22" fill="#e6e6e6" /><text x="69" y="246" font-family="Liberation Sans" font-size="13.5" fill="#000" font-weight="bold" font-style="normal" text-anchor="start" textLength="23" lengthAdjust="spacingAndGlyphs" >500</text><path d="M219 238 l5 5 l5 -5" fill="none" stroke="#555" stroke-width="1.2" /><rect x="235" y="202" width="51" height="426" fill="#dcdcdc" /><rect x="236" y="203" width="24" height="24" fill="#f0f0f0" /><rect x="261" y="203" width="24" height="24" fill="#f0f0f0" /><rect x="236" y="228" width="24" height="24" fill="#f0f0f0" /><rect x="261" y="228" width="24" height="24" fill="#f0f0f0" /><rect x="236" y="253" width="24" height="24" fill="#f0f0f0" /><rect x="261" y="253" width="24" height="24" fill="#f0f0f0" /><rect x="236" y="278" width="49" height="24" fill="#f0f0f0" /><rect x="236" y="303" width="24" height="24" fill="#f0f0f0" /><rect x="261" y="303" width="24" height="24" fill="#f0f0f0" /><rect x="236" y="328" width="24" height="24" fill="#f0f0f0" /><rect x="261" y="328" width="24" height="24" fill="#f0f0f0" /><rect x="236" y="353" width="24" height="24" fill="#f0f0f0" /><rect x="261" y="353" width="24" height="24" fill="#f0f0f0" /><rect x="236" y="378" width="24" height="24" fill="#f0f0f0" /><rect x="261" y="378" width="24" height="24" fill="#f0f0f0" /><rect x="236" y="403" width="49" height="24" fill="#f0f0f0" /><rect x="236" y="428" width="49" height="24" fill="#f0f0f0" /><rect x="236" y="453" width="24" height="24" fill="#f0f0f0" /><rect x="261" y="453" width="24" height="24" fill="#f0f0f0" /><rect x="236" y="478" width="49" height="24" fill="#f0f0f0" /><rect x="236" y="503" width="49" height="24" fill="#f0f0f0" /><rect x="236" y="528" width="49" height="24" fill="#f0f0f0" /><rect x="236" y="553" width="49" height="24" fill="#f0f0f0" /><rect x="236" y="578" width="49" height="24" fill="#f0f0f0" /><rect x="236" y="603" width="49" height="24" fill="#f0f0f0" /><path d="M240 220 L247 210 M243 220 L250 210 M246 220 L253 210" fill="none" stroke="#111" stroke-width="1.2" /><path d="M250 213 V222 L252 220 L254 223 L255 222 L254 219 H256 Z" fill="#fff" stroke="#111" stroke-width="0.8" /><path d="M267 209 H265 V221 H267" fill="none" stroke="#111" stroke-width="1.2" /><rect x="269.5" y="210.5" width="3" height="3" fill="none" stroke="#4caf50" stroke-width="1" /><rect x="269.5" y="215.5" width="3" height="3" fill="none" stroke="#4caf50" stroke-width="1" /><path d="M275 213 V222 L277 220 L279 223 L280 222 L279 219 H281 Z" fill="#fff" stroke="#111" stroke-width="0.8" /><path d="M243 243 L252 235 M245 246 L254 238 M244 237 L251 245 M248 234 L255 242" fill="none" stroke="#666" stroke-width="1" /><circle cx="243" cy="243" r="3.2" fill="#f5c060" stroke="none" stroke-width="1" /><path d="M242 246.5 h3 l-1.5 2 z" fill="#333" stroke="none" stroke-width="1" /><text x="255" y="239" font-family="Liberation Sans" font-size="10" fill="#e02020" font-weight="bold" font-style="normal" text-anchor="middle" >Z</text><path d="M268 243 L277 235 M270 246 L279 238 M269 237 L276 245 M273 234 L280 242" fill="none" stroke="#666" stroke-width="1" /><circle cx="268" cy="243" r="3.2" fill="#f5c060" stroke="none" stroke-width="1" /><path d="M267 246.5 h3 l-1.5 2 z" fill="#333" stroke="none" stroke-width="1" /><text x="280" y="239" font-family="Liberation Sans" font-size="10" fill="#1a1aee" font-weight="bold" font-style="normal" text-anchor="middle" >C</text><text x="248" y="264" font-family="Liberation Sans" font-size="9" fill="#111" font-weight="normal" font-style="normal" text-anchor="middle" >12,3</text><path d="M242 270 l3 -3 l3 3 l-3 3 z" fill="none" stroke="#111" stroke-width="1.2" /><text x="276" y="263" font-family="Liberation Sans" font-size="8" fill="#111" font-weight="normal" font-style="normal" text-anchor="middle" >100</text><line x1="268" y1="264.5" x2="284" y2="264.5" stroke="#111" stroke-width="1"/><text x="276" y="272" font-family="Liberation Sans" font-size="8" fill="#111" font-weight="normal" font-style="normal" text-anchor="middle" >100</text><circle cx="266" cy="271" r="1.8" fill="none" stroke="#111" stroke-width="1" /><path d="M252 296 L268 284" fill="none" stroke="#111" stroke-width="1.2" /><circle cx="253" cy="296" r="2" fill="#fff" stroke="#111" stroke-width="1" /><circle cx="267" cy="284" r="2" fill="#fff" stroke="#111" stroke-width="1" /><path d="M252 290 l4 -3 l0 6 z M266 290 l-4 3 l0 -6 z" fill="#111" stroke="none" stroke-width="1" /><path d="M242 321 L254 310" fill="none" stroke="#111" stroke-width="1.2" /><circle cx="242" cy="321" r="1.8" fill="#fff" stroke="#111" stroke-width="1" /><circle cx="254" cy="310" r="1.8" fill="#fff" stroke="#111" stroke-width="1" /><path d="M240 310 h5 M242.5 307.5 v5" fill="none" stroke="#111" stroke-width="1.6" /><path d="M248 317 l4 3 l-1 -4 z" fill="#111" stroke="none" stroke-width="1" /><path d="M267 321 L279 310" fill="none" stroke="#111" stroke-width="1.2" /><circle cx="267" cy="321" r="1.8" fill="#fff" stroke="#111" stroke-width="1" /><circle cx="279" cy="310" r="1.8" fill="#fff" stroke="#111" stroke-width="1" /><path d="M265 310 h5" fill="none" stroke="#111" stroke-width="1.6" /><path d="M273 317 l4 3 l-1 -4 z" fill="#111" stroke="none" stroke-width="1" /><path d="M242 346 L254 335" fill="none" stroke="#111" stroke-width="1.2" /><circle cx="242" cy="346" r="1.8" fill="#fff" stroke="#111" stroke-width="1" /><circle cx="254" cy="335" r="1.8" fill="#fff" stroke="#111" stroke-width="1" /><circle cx="246" cy="342" r="1.5" fill="#fff" stroke="#111" stroke-width="1" /><circle cx="250" cy="338" r="1.5" fill="#fff" stroke="#111" stroke-width="1" /><path d="M240 335 h5" fill="none" stroke="#111" stroke-width="1.6" /><path d="M267 346 L279 335" fill="none" stroke="#111" stroke-width="1.2" /><circle cx="267" cy="346" r="1.8" fill="#fff" stroke="#111" stroke-width="1" /><circle cx="279" cy="335" r="1.8" fill="#fff" stroke="#111" stroke-width="1" /><circle cx="271" cy="342" r="1.5" fill="#fff" stroke="#111" stroke-width="1" /><circle cx="275" cy="338" r="1.5" fill="#fff" stroke="#111" stroke-width="1" /><path d="M265 335 h5" fill="none" stroke="#111" stroke-width="1.6" /><path d="M242 371 L254 360" fill="none" stroke="#111" stroke-width="1.2" /><circle cx="242" cy="371" r="1.8" fill="#fff" stroke="#111" stroke-width="1" /><circle cx="254" cy="360" r="1.8" fill="#fff" stroke="#111" stroke-width="1" /><path d="M267 371 Q271 361 279 360" fill="none" stroke="#111" stroke-width="1.2" /><circle cx="267" cy="371" r="1.8" fill="#fff" stroke="#111" stroke-width="1" /><circle cx="279" cy="360" r="1.8" fill="#fff" stroke="#111" stroke-width="1" /><path d="M242 396 Q243 384 254 385" fill="none" stroke="#111" stroke-width="1.2" /><circle cx="242" cy="396" r="1.8" fill="#fff" stroke="#111" stroke-width="1" /><circle cx="254" cy="385" r="1.8" fill="#fff" stroke="#111" stroke-width="1" /><path d="M245 389 l3 4 l2 -2 z" fill="#111" stroke="none" stroke-width="1" /><path d="M267 396 Q268 384 279 385" fill="none" stroke="#111" stroke-width="1.2" /><circle cx="267" cy="396" r="1.8" fill="#fff" stroke="#111" stroke-width="1" /><circle cx="279" cy="385" r="1.8" fill="#fff" stroke="#111" stroke-width="1" /><path d="M270 389 l3 4 l2 -2 z" fill="#111" stroke="none" stroke-width="1" /><path d="M252 421 L262 411" fill="none" stroke="#111" stroke-width="3.5" /><path d="M262 411 L266 407" fill="none" stroke="#111" stroke-width="1" /><circle cx="267" cy="407" r="1.8" fill="#fff" stroke="#111" stroke-width="1" /><text x="258" y="439" font-family="Liberation Sans" font-size="9" fill="#111" font-weight="normal" font-style="normal" text-anchor="middle" >2d</text><path d="M254 446 L266 437" fill="none" stroke="#111" stroke-width="1" /><circle cx="254" cy="446" r="1.8" fill="#fff" stroke="#111" stroke-width="1" /><circle cx="266" cy="437" r="1.8" fill="#fff" stroke="#111" stroke-width="1" /><path d="M242 459 H254 L252 471 H243 Z" fill="none" stroke="#111" stroke-width="1.2" /><circle cx="243" cy="471" r="1.8" fill="#fff" stroke="#111" stroke-width="1" /><circle cx="254" cy="459" r="1.8" fill="#fff" stroke="#111" stroke-width="1" /><path d="M266 471 V465 Q270 465 271 461 Q276 458 280 461 V471 Z" fill="none" stroke="#111" stroke-width="1.2" /><circle cx="266" cy="471" r="1.8" fill="#fff" stroke="#111" stroke-width="1" /><circle cx="280" cy="461" r="1.8" fill="#fff" stroke="#111" stroke-width="1" /><circle cx="272" cy="461" r="1.8" fill="#fff" stroke="#111" stroke-width="1" /><path d="M252 485 H266 M254 485 V496 M258 485 V493 M262 485 V490" fill="none" stroke="#111" stroke-width="1.2" /><path d="M258 495 L266 487 L268 489 L260 497 Z" fill="#fff" stroke="#111" stroke-width="1" /><path d="M252 521 H266" fill="none" stroke="#111" stroke-width="1.2" /><circle cx="252" cy="521" r="1.8" fill="#fff" stroke="#111" stroke-width="1" /><circle cx="266" cy="521" r="1.8" fill="#fff" stroke="#111" stroke-width="1" /><path d="M257 517 L267 510 V517 Z" fill="#999" stroke="none" stroke-width="1" /><path d="M252 510 l4 -3 v2 h3 v2 h-3 v2 z" fill="#111" stroke="none" stroke-width="1" /><path d="M256 532 L262 538 M262 532 L256 538 M253 540 H265 M259 540 V544 M255 539 L259 544 L263 539" fill="none" stroke="#111" stroke-width="1.4" /><path d="M254 546 Q256 543 259 544" fill="none" stroke="#111" stroke-width="1" /><circle cx="253" cy="547" r="1.8" fill="#fff" stroke="#111" stroke-width="1" /><circle cx="254" cy="570" r="3" fill="none" stroke="#111" stroke-width="1" /><path d="M252 570 h4 M254 568 v4" fill="none" stroke="#111" stroke-width="0.8" /><path d="M257 568 Q262 565 261 561" fill="none" stroke="#888" stroke-width="1" stroke-dasharray="2 1"/><rect x="262.5" y="557.5" width="6" height="6" fill="none" stroke="#111" stroke-width="1" /><path d="M263 558 l5 5 m0 -5 l-5 5" fill="none" stroke="#111" stroke-width="0.8" /><path d="M252 584 L257 595 L265 588 L268 595" fill="none" stroke="#e07800" stroke-width="1" /><rect x="249.5" y="581.5" width="5" height="5" fill="none" stroke="#e07800" stroke-width="1" /><rect x="254.5" y="592.5" width="5" height="5" fill="none" stroke="#e07800" stroke-width="1" /><rect x="262.5" y="585.5" width="5" height="5" fill="none" stroke="#e07800" stroke-width="1" /><rect x="265.5" y="592.5" width="5" height="5" fill="none" stroke="#e07800" stroke-width="1" /><rect x="257.5" y="587.5" width="5" height="5" fill="none" stroke="#e07800" stroke-width="1" /><rect x="252" y="609" width="9" height="12" fill="#fff" stroke="#111" stroke-width="1.2"/><path d="M254 612h5M254 615h5M254 618h5" fill="none" stroke="#111" stroke-width="0.8" /><path d="M262 609 h4 v3 l3 0 l-5 4 l-5 -4 h3 z" fill="#111" stroke="none" stroke-width="1" /><path d="M264 617 l3 3 l-3 3 l-3 -3 z" fill="#fff" stroke="#111" stroke-width="1" /><clipPath id="lc"><rect x="17" y="255" width="201" height="460"/></clipPath><g clip-path="url(#lc)"><path d="M19 260 H25 L27 262 H33 V268 H19 Z" fill="#e4b31a" stroke="none" stroke-width="1" /><path d="M22 263 H35 L32 269 H19 Z" fill="#f6cf50" stroke="none" stroke-width="1" /><text x="39" y="269" font-family="Liberation Sans" font-size="14" fill="#000" font-weight="normal" font-style="normal" text-anchor="start" textLength="105" lengthAdjust="spacingAndGlyphs" >Растительность</text><line x1="26.5" y1="272" x2="26.5" y2="716" stroke="#a0a0a0" stroke-width="1" stroke-dasharray="1 1"/><line x1="27" y1="283.5" x2="37" y2="283.5" stroke="#a0a0a0" stroke-width="1" stroke-dasharray="1 1"/><text x="38.5" y="288" font-family="Liberation Serif" font-size="13" fill="#000" font-weight="bold" font-style="normal" text-anchor="start" >T</text><text x="45" y="288" font-family="Liberation Serif" font-size="10" fill="#000" font-weight="bold" font-style="normal" text-anchor="start" >т</text><text x="57" y="288" font-family="Liberation Sans" font-size="14.3" fill="#000" font-weight="normal" font-style="normal" text-anchor="start" >Текст пояснительный</text><line x1="27" y1="301.5" x2="37" y2="301.5" stroke="#a0a0a0" stroke-width="1" stroke-dasharray="1 1"/><path d="M40.5 294 V308 H39 M40.5 294 L38.5 296 M40.5 294 L42.5 296 M40.5 298 L37.5 301 M40.5 298 L43.5 301 M40.5 301 L37 305 M40.5 301 L44 305" fill="none" stroke="#111" stroke-width="1" /><path d="M46.5 294 H50.5 V300 H51.5 V305 H45.5 V300 H46.5 Z M48.5 305 V308 H47" fill="none" stroke="#111" stroke-width="1" /><text x="57" y="306" font-family="Liberation Sans" font-size="14.3" fill="#000" font-weight="normal" font-style="normal" text-anchor="start" >Характеристики лесных.</text><line x1="27" y1="319.5" x2="37" y2="319.5" stroke="#a0a0a0" stroke-width="1" stroke-dasharray="1 1"/><rect x="22" y="315" width="9" height="9" fill="#f4f4f4" stroke="#8a8a8a" stroke-width="1"/><path d="M24 319.5 h5 M26.5 317 v5" fill="none" stroke="#1a2a7a" stroke-width="1" /><path d="M42 316 Q42 312 45 312 Q48 312 48 316 V320 Q48 323 45 323 Q42 323 42 320 Z M45 323 V326" fill="none" stroke="#111" stroke-width="1.1" /><text x="57" y="324" font-family="Liberation Sans" font-size="14.3" fill="#000" font-weight="normal" font-style="normal" text-anchor="start" >Деревья отдельно стоящ</text><line x1="27" y1="337.5" x2="37" y2="337.5" stroke="#a0a0a0" stroke-width="1" stroke-dasharray="1 1"/><rect x="22" y="333" width="9" height="9" fill="#f4f4f4" stroke="#8a8a8a" stroke-width="1"/><path d="M24 337.5 h5 M26.5 335 v5" fill="none" stroke="#1a2a7a" stroke-width="1" /><circle cx="45" cy="331" r="1.8" fill="none" stroke="#111" stroke-width="1" /><circle cx="45" cy="337" r="2.5" fill="none" stroke="#111" stroke-width="1" /><circle cx="40" cy="342" r="1.8" fill="none" stroke="#111" stroke-width="1" /><circle cx="50" cy="342" r="1.8" fill="none" stroke="#111" stroke-width="1" /><text x="57" y="342" font-family="Liberation Sans" font-size="14.3" fill="#000" font-weight="normal" font-style="normal" text-anchor="start" >Кусты отдельно стоящие</text><line x1="27" y1="355.5" x2="37" y2="355.5" stroke="#a0a0a0" stroke-width="1" stroke-dasharray="1 1"/><rect x="22" y="351" width="9" height="9" fill="#f4f4f4" stroke="#8a8a8a" stroke-width="1"/><path d="M24 355.5 h5 M26.5 353 v5" fill="none" stroke="#1a2a7a" stroke-width="1" /><path d="M42 351 L43.5 356 M45.5 350 V356 M49 351 L47.5 356" fill="none" stroke="#111" stroke-width="1" /><line x1="41" y1="358.5" x2="49" y2="358.5" stroke="#2a9a2a" stroke-width="1"/><text x="57" y="360" font-family="Liberation Sans" font-size="14.3" fill="#000" font-weight="normal" font-style="normal" text-anchor="start" >Мочажинки, внемасштаб</text><line x1="27" y1="373.5" x2="37" y2="373.5" stroke="#a0a0a0" stroke-width="1" stroke-dasharray="1 1"/><rect x="22" y="369" width="9" height="9" fill="#f4f4f4" stroke="#8a8a8a" stroke-width="1"/><path d="M24 373.5 h5 M26.5 371 v5" fill="none" stroke="#1a2a7a" stroke-width="1" /><circle cx="40" cy="378" r="1.7" fill="none" stroke="#111" stroke-width="1" /><circle cx="50" cy="367" r="1.7" fill="none" stroke="#111" stroke-width="1" /><rect x="42.5" y="370" width="4" height="6.5" rx="2" transform="rotate(45 44.5 373)" fill="none" stroke="#111" stroke-width="1.1"/><text x="57" y="378" font-family="Liberation Sans" font-size="14.3" fill="#000" font-weight="normal" font-style="normal" text-anchor="start" >Ряд деревьев до 2мм в м</text><line x1="27" y1="391.5" x2="37" y2="391.5" stroke="#a0a0a0" stroke-width="1" stroke-dasharray="1 1"/><rect x="22" y="387" width="9" height="9" fill="#f4f4f4" stroke="#8a8a8a" stroke-width="1"/><path d="M24 391.5 h5 M26.5 389 v5" fill="none" stroke="#1a2a7a" stroke-width="1" /><circle cx="40" cy="396" r="1.7" fill="none" stroke="#111" stroke-width="1" /><circle cx="50" cy="385" r="1.7" fill="none" stroke="#111" stroke-width="1" /><path d="M42 388 L48 395 M46 387 L42 393" fill="none" stroke="#111" stroke-width="1.1" /><path d="M41 386 l4 0.5 l-3 3 z" fill="#111" stroke="none" stroke-width="1" /><text x="57" y="396" font-family="Liberation Sans" font-size="14.3" fill="#000" font-weight="normal" font-style="normal" text-anchor="start" >Ряд деревьев 2-10мм в м</text><line x1="27" y1="409.5" x2="37" y2="409.5" stroke="#a0a0a0" stroke-width="1" stroke-dasharray="1 1"/><circle cx="38.5" cy="414.5" r="1.3" fill="#111" stroke="none" stroke-width="1" /><circle cx="41.8" cy="411.5" r="1.6" fill="none" stroke="#111" stroke-width="1" /><circle cx="44.8" cy="409" r="1.3" fill="#111" stroke="none" stroke-width="1" /><circle cx="47.8" cy="406.2" r="1.6" fill="none" stroke="#111" stroke-width="1" /><circle cx="50.5" cy="403.5" r="1.3" fill="#111" stroke="none" stroke-width="1" /><text x="57" y="414" font-family="Liberation Sans" font-size="14.3" fill="#000" font-weight="normal" font-style="normal" text-anchor="start" >Полосы кустарников шир</text><line x1="27" y1="427.5" x2="37" y2="427.5" stroke="#a0a0a0" stroke-width="1" stroke-dasharray="1 1"/><rect x="22" y="423" width="9" height="9" fill="#f4f4f4" stroke="#8a8a8a" stroke-width="1"/><path d="M24 427.5 h5 M26.5 425 v5" fill="none" stroke="#1a2a7a" stroke-width="1" /><line x1="39" y1="434" x2="51" y2="421" stroke="#111" stroke-width="1" stroke-dasharray="4 3"/><text x="57" y="432" font-family="Liberation Sans" font-size="14.3" fill="#000" font-weight="normal" font-style="normal" text-anchor="start" >Просеки в лесу</text><rect x="55" y="436" width="107" height="18" fill="#efefef" /><line x1="27" y1="445.5" x2="37" y2="445.5" stroke="#a0a0a0" stroke-width="1" stroke-dasharray="1 1"/><line x1="38" y1="452" x2="51" y2="439" stroke="#111" stroke-width="1.2" stroke-dasharray="1.2 1.6"/><text x="57" y="450" font-family="Liberation Sans" font-size="14.3" fill="#000" font-weight="normal" font-style="normal" text-anchor="start" >Границы угодий</text><line x1="27" y1="463.5" x2="37" y2="463.5" stroke="#a0a0a0" stroke-width="1" stroke-dasharray="1 1"/><rect x="37.5" y="454.5" width="14" height="14" fill="#fff" stroke="#111" stroke-width="1.3"/><circle cx="44.5" cy="458.5" r="2" fill="none" stroke="#111" stroke-width="1" /><circle cx="40.5" cy="465.0" r="2" fill="none" stroke="#111" stroke-width="1.2" /><circle cx="48.5" cy="465.0" r="2" fill="none" stroke="#111" stroke-width="1.2" /><text x="57" y="468" font-family="Liberation Sans" font-size="14.3" fill="#000" font-weight="normal" font-style="normal" text-anchor="start" >Леса естественные высо</text><line x1="27" y1="481.5" x2="37" y2="481.5" stroke="#a0a0a0" stroke-width="1" stroke-dasharray="1 1"/><rect x="37.5" y="472.5" width="14" height="14" fill="#fff" stroke="#111" stroke-width="1.3"/><circle cx="40.5" cy="476.5" r="2" fill="none" stroke="#111" stroke-width="1.2" /><circle cx="40.5" cy="483.0" r="2" fill="none" stroke="#111" stroke-width="1.2" /><circle cx="48.5" cy="476.5" r="2" fill="none" stroke="#111" stroke-width="1.2" /><circle cx="48.5" cy="483.0" r="2" fill="none" stroke="#111" stroke-width="1.2" /><text x="57" y="486" font-family="Liberation Sans" font-size="14.3" fill="#000" font-weight="normal" font-style="normal" text-anchor="start" >Леса саженые высокосте</text><line x1="27" y1="499.5" x2="37" y2="499.5" stroke="#a0a0a0" stroke-width="1" stroke-dasharray="1 1"/><rect x="37.5" y="490.5" width="14" height="14" fill="#fff" stroke="#111" stroke-width="1.3"/><circle cx="44.5" cy="494.5" r="1.8" fill="none" stroke="#111" stroke-width="1" /><circle cx="41" cy="500.5" r="1.8" fill="none" stroke="#111" stroke-width="1" /><circle cx="48" cy="499.0" r="1.8" fill="none" stroke="#111" stroke-width="1" /><text x="57" y="504" font-family="Liberation Sans" font-size="14.3" fill="#000" font-weight="normal" font-style="normal" text-anchor="start" >Леса угнетенные низкор</text><line x1="27" y1="517.5" x2="37" y2="517.5" stroke="#a0a0a0" stroke-width="1" stroke-dasharray="1 1"/><rect x="37.5" y="508.5" width="14" height="14" fill="#fff" stroke="#111" stroke-width="1.3"/><circle cx="47" cy="513.0" r="2" fill="none" stroke="#111" stroke-width="1" /><circle cx="41.5" cy="518.5" r="2" fill="none" stroke="#111" stroke-width="1" /><path d="M45 515.5 L49 510.5 M39.5 521.0 L43.5 516.0" fill="none" stroke="#111" stroke-width="0.9" /><text x="57" y="522" font-family="Liberation Sans" font-size="14.3" fill="#000" font-weight="normal" font-style="normal" text-anchor="start" >Криволесье</text><line x1="27" y1="535.5" x2="37" y2="535.5" stroke="#a0a0a0" stroke-width="1" stroke-dasharray="1 1"/><rect x="37.5" y="526.5" width="14" height="14" fill="#fff" stroke="#111" stroke-width="1.3"/><path d="M43 528.5 l1.5 1.5 l-1.5 1.5 l-1.5 -1.5 z" fill="none" stroke="#111" stroke-width="0.9" /><path d="M47.5 532.5 l1.5 1.5 l-1.5 1.5 l-1.5 -1.5 z" fill="none" stroke="#111" stroke-width="0.9" /><path d="M40.5 535.5 l1.5 1.5 l-1.5 1.5 l-1.5 -1.5 z" fill="none" stroke="#111" stroke-width="0.9" /><text x="57" y="540" font-family="Liberation Sans" font-size="14.3" fill="#000" font-weight="normal" font-style="normal" text-anchor="start" >Поросль леса</text><line x1="27" y1="553.5" x2="37" y2="553.5" stroke="#a0a0a0" stroke-width="1" stroke-dasharray="1 1"/><rect x="37.5" y="544.5" width="14" height="14" fill="#fff" stroke="#111" stroke-width="1.3"/><circle cx="44.5" cy="548.5" r="2" fill="none" stroke="#111" stroke-width="1" /><circle cx="40.5" cy="555.0" r="2" fill="none" stroke="#111" stroke-width="1.2" /><circle cx="48.5" cy="555.0" r="2" fill="none" stroke="#111" stroke-width="1.2" /><text x="57" y="558" font-family="Liberation Sans" font-size="14.3" fill="#000" font-weight="normal" font-style="normal" text-anchor="start" >Редколесье высокоство.</text><line x1="27" y1="571.5" x2="37" y2="571.5" stroke="#a0a0a0" stroke-width="1" stroke-dasharray="1 1"/><rect x="37.5" y="562.5" width="14" height="14" fill="#fff" stroke="#111" stroke-width="1.3"/><circle cx="44" cy="566.0" r="1.6" fill="none" stroke="#111" stroke-width="1" /><circle cx="41" cy="572.5" r="1.6" fill="none" stroke="#111" stroke-width="1" /><circle cx="48" cy="570.5" r="1.6" fill="none" stroke="#111" stroke-width="1" /><text x="57" y="576" font-family="Liberation Sans" font-size="14.3" fill="#000" font-weight="normal" font-style="normal" text-anchor="start" >Редколесье угнетенное </text><line x1="27" y1="589.5" x2="37" y2="589.5" stroke="#a0a0a0" stroke-width="1" stroke-dasharray="1 1"/><rect x="37.5" y="580.5" width="14" height="14" fill="#fff" stroke="#111" stroke-width="1.3"/><path d="M43 582.5 l1.5 1.5 l-1.5 1.5 l-1.5 -1.5 z" fill="none" stroke="#111" stroke-width="0.9" /><path d="M47.5 586.5 l1.5 1.5 l-1.5 1.5 l-1.5 -1.5 z" fill="none" stroke="#111" stroke-width="0.9" /><path d="M40.5 589.5 l1.5 1.5 l-1.5 1.5 l-1.5 -1.5 z" fill="none" stroke="#111" stroke-width="0.9" /><text x="57" y="594" font-family="Liberation Sans" font-size="14.3" fill="#000" font-weight="normal" font-style="normal" text-anchor="start" >Редкая поросль леса</text><line x1="27" y1="607.5" x2="37" y2="607.5" stroke="#a0a0a0" stroke-width="1" stroke-dasharray="1 1"/><rect x="37.5" y="598.5" width="14" height="14" fill="#fff" stroke="#111" stroke-width="1.3"/><path d="M45.5 604.5 L49 601.5 M45.5 604.5 H49 M39.5 610.5 L43 607.5 M39.5 610.5 H43" fill="none" stroke="#111" stroke-width="1" /><text x="57" y="612" font-family="Liberation Sans" font-size="14.3" fill="#000" font-weight="normal" font-style="normal" text-anchor="start" >Буреломы и ветровалы</text><line x1="27" y1="625.5" x2="37" y2="625.5" stroke="#a0a0a0" stroke-width="1" stroke-dasharray="1 1"/><rect x="37.5" y="616.5" width="14" height="14" fill="#fff" stroke="#111" stroke-width="1.3"/><path d="M45.5 619.5 Q47.5 621.5 49.5 619.5 M47.5 620.5 V624.5 M39.5 624.5 Q41.5 626.5 43.5 624.5 M41.5 625.5 V629.5" fill="none" stroke="#111" stroke-width="1" /><text x="57" y="630" font-family="Liberation Sans" font-size="14.3" fill="#000" font-weight="normal" font-style="normal" text-anchor="start" >Участки леса горелые и</text><line x1="27" y1="643.5" x2="37" y2="643.5" stroke="#a0a0a0" stroke-width="1" stroke-dasharray="1 1"/><rect x="37.5" y="634.5" width="14" height="14" fill="#fff" stroke="#111" stroke-width="1.3"/><path d="M47.5 636.5 V640.5 H49.5 M40.5 643.5 V647.5 H42.5" fill="none" stroke="#111" stroke-width="1" /><text x="57" y="648" font-family="Liberation Sans" font-size="14.3" fill="#000" font-weight="normal" font-style="normal" text-anchor="start" >Участки леса вырубленн</text><line x1="27" y1="661.5" x2="37" y2="661.5" stroke="#a0a0a0" stroke-width="1" stroke-dasharray="1 1"/><rect x="37.5" y="652.5" width="14" height="14" fill="#fff" stroke="#111" stroke-width="1.3"/><path d="M46 655.5 l3 3 m0 -3 l-3 3 M40 661.5 l3 3 m0 -3 l-3 3" fill="none" stroke="#111" stroke-width="0.9" /><text x="57" y="666" font-family="Liberation Sans" font-size="14.3" fill="#000" font-weight="normal" font-style="normal" text-anchor="start" >Газоны</text><line x1="27" y1="679.5" x2="37" y2="679.5" stroke="#a0a0a0" stroke-width="1" stroke-dasharray="1 1"/><rect x="37.5" y="670.5" width="14" height="14" fill="#fff" stroke="#111" stroke-width="1.3"/><path d="M47 672.5 v3 M49 672.5 v3 M40 680.5 v3 M42 680.5 v3" fill="none" stroke="#111" stroke-width="0.9" /><text x="57" y="684" font-family="Liberation Sans" font-size="14.3" fill="#000" font-weight="normal" font-style="normal" text-anchor="start" >Растительность травяна</text><line x1="27" y1="697.5" x2="37" y2="697.5" stroke="#a0a0a0" stroke-width="1" stroke-dasharray="1 1"/><rect x="37.5" y="688.5" width="14" height="14" fill="#fff" stroke="#111" stroke-width="1.3"/><path d="M45.5 690.5 v4 M47.5 690.5 v4 M49.5 690.5 v4 M39.5 697.5 v4 M41.5 697.5 v4 M43.5 697.5 v4" fill="none" stroke="#111" stroke-width="0.9" /><text x="57" y="702" font-family="Liberation Sans" font-size="14.3" fill="#000" font-weight="normal" font-style="normal" text-anchor="start" >Растительность высокот</text><line x1="27" y1="715.5" x2="37" y2="715.5" stroke="#a0a0a0" stroke-width="1" stroke-dasharray="1 1"/><rect x="37.5" y="706.5" width="14" height="14" fill="#fff" stroke="#111" stroke-width="1.3"/><path d="M45 708.5 Q47 711.5 49 708.5 M47 710.5 V713.5" fill="none" stroke="#111" stroke-width="1" /><text x="57" y="720" font-family="Liberation Sans" font-size="14.3" fill="#000" font-weight="normal" font-style="normal" text-anchor="start" >Растительность травяно</text></g><rect x="218" y="255" width="15" height="460" fill="#f0f0f0" /><rect x="219" y="344" width="14" height="149" fill="#cdcdcd" /><path d="M221 267 l4.5 -4.5 l4.5 4.5" fill="none" stroke="#555" stroke-width="1.5" /><path d="M221 702 l4.5 4.5 l4.5 -4.5" fill="none" stroke="#555" stroke-width="1.5" /><rect x="17" y="715" width="216" height="15" fill="#f0f0f0" /><rect x="33" y="716" width="108" height="13" fill="#cdcdcd" /><path d="M27 718 l-4.5 4.5 l4.5 4.5" fill="none" stroke="#555" stroke-width="1.5" /><path d="M207 718 l4.5 4.5 l-4.5 4.5" fill="none" stroke="#555" stroke-width="1.5" /><rect x="16.5" y="732.5" width="12" height="12" fill="#fff" stroke="#333" stroke-width="1" /><path d="M18.5 738 l3 3.5 l5.5 -6.5" fill="none" stroke="#333" stroke-width="1.3" /><text x="32" y="743" font-family="Liberation Sans" font-size="11" fill="#000" font-weight="normal" font-style="normal" text-anchor="start" textLength="151" lengthAdjust="spacingAndGlyphs" >Множественный выбор линий</text><rect x="16.5" y="749.5" width="12" height="12" fill="#fff" stroke="#333" stroke-width="1" /><text x="32" y="760" font-family="Liberation Sans" font-size="11" fill="#000" font-weight="normal" font-style="normal" text-anchor="start" textLength="151" lengthAdjust="spacingAndGlyphs" >Создавать скелетную модель</text><rect x="192.5" y="749.5" width="12" height="12" fill="#fff" stroke="#333" stroke-width="1" /><text x="208" y="760" font-family="Liberation Sans" font-size="11" fill="#000" font-weight="normal" font-style="normal" text-anchor="start" textLength="45" lengthAdjust="spacingAndGlyphs" >OSNAPZ</text><rect x="264" y="751" width="16" height="10" fill="#fff" stroke="#111" stroke-width="1"/><text x="272" y="760" font-family="Liberation Sans" font-size="9" fill="#000" font-weight="normal" font-style="normal" text-anchor="middle" >0.0</text><path d="M268 750 l3 3 l6 -7" fill="none" stroke="#2ab02a" stroke-width="2" /><rect x="15" y="765" width="274" height="18" fill="#f0f0f0" /><circle cx="22.5" cy="775" r="5" fill="url(#g7)" stroke="none" stroke-width="1" /><text x="46.5" y="779" font-family="Liberation Sans" font-size="11" fill="#000" font-weight="normal" font-style="normal" text-anchor="start" textLength="222" lengthAdjust="spacingAndGlyphs" >версия 2021.8.24 обновление не требуется!</text><rect x="289" y="146" width="688" height="641" fill="#575757" /><rect x="320" y="150" width="626" height="595" fill="#ffffff" /><rect x="291" y="150" width="26" height="447" fill="#383838" /><rect x="292" y="151" width="24" height="445" fill="#5a5a5a" /><rect x="292" y="151" width="24" height="8" fill="#4b4b4b" /><path d="M297 154h1v1h-1zM299 154h1v1h-1zM301 154h1v1h-1zM303 154h1v1h-1zM305 154h1v1h-1zM307 154h1v1h-1zM309 154h1v1h-1zM297 156h1v1h-1zM299 156h1v1h-1zM301 156h1v1h-1zM303 156h1v1h-1zM305 156h1v1h-1zM307 156h1v1h-1zM309 156h1v1h-1z" fill="#050505" stroke="none" stroke-width="1" /><rect x="291" y="600" width="26" height="146" fill="#383838" /><rect x="292" y="601" width="24" height="144" fill="#5a5a5a" /><rect x="292" y="601" width="24" height="8" fill="#4b4b4b" /><path d="M297 604h1v1h-1zM299 604h1v1h-1zM301 604h1v1h-1zM303 604h1v1h-1zM305 604h1v1h-1zM307 604h1v1h-1zM309 604h1v1h-1zM297 606h1v1h-1zM299 606h1v1h-1zM301 606h1v1h-1zM303 606h1v1h-1zM305 606h1v1h-1zM307 606h1v1h-1zM309 606h1v1h-1z" fill="#050505" stroke="none" stroke-width="1" /><path d="M297 176 L309 164" fill="none" stroke="#e0e0e0" stroke-width="1" /><rect x="295" y="176" width="2" height="2" fill="#5ab4f0" /><rect x="309" y="162" width="2" height="2" fill="#5ab4f0" /><path d="M297 197 L309 185" fill="none" stroke="#e0e0e0" stroke-width="1" /><path d="M295 199 l1.5 -5.5 l4 4 z M311 183 l-1.5 5.5 l-4 -4 z" fill="#e0e0e0" stroke="none" stroke-width="1" /><rect x="302" y="190" width="2" height="2" fill="#5ab4f0" /><path d="M297 218 H305 A4 4 0 0 0 305 210" fill="none" stroke="#e0e0e0" stroke-width="1" /><rect x="295" y="217" width="2" height="2" fill="#5ab4f0" /><rect x="304" y="217" width="2" height="2" fill="#5ab4f0" /><rect x="304" y="208" width="2" height="2" fill="#5ab4f0" /><path d="M303 230 L309.5 235 L307 242 H299 L296.5 235 Z" fill="none" stroke="#e0e0e0" stroke-width="1" /><rect x="302" y="235" width="2" height="2" fill="#5ab4f0" /><rect x="306" y="241" width="2" height="2" fill="#5ab4f0" /><path d="M296.5 253.5 H309.5 V263.5 H296.5 Z" fill="none" stroke="#e0e0e0" stroke-width="1" /><rect x="295" y="251" width="2" height="2" fill="#5ab4f0" /><rect x="309" y="263" width="2" height="2" fill="#5ab4f0" /><path d="M297 286 Q299 275 310 274" fill="none" stroke="#e0e0e0" stroke-width="1" /><rect x="296" y="285" width="2" height="2" fill="#5ab4f0" /><rect x="301" y="276" width="2" height="2" fill="#5ab4f0" /><rect x="309" y="273" width="2" height="2" fill="#5ab4f0" /><circle cx="303" cy="302" r="7" fill="none" stroke="#e0e0e0" stroke-width="1" /><path d="M303 302 L307 298" fill="none" stroke="#5ab4f0" stroke-width="1" /><path d="M308 297 l-3.5 0.5 l3 3 z" fill="#5ab4f0" stroke="none" stroke-width="1" /><rect x="302" y="302" width="2" height="2" fill="#5ab4f0" /><path d="M298 327 Q295 325 297 322 Q297 318 301 319 Q304 317 306 320 Q310 320 309 324 Q311 327 307 329 Q304 332 301 329 Q298 330 298 327 Z" fill="none" stroke="#e0e0e0" stroke-width="1" /><path d="M296 352 Q296 345 299 343 L305 349 Q309 345 310 340" fill="none" stroke="#e0e0e0" stroke-width="1" /><rect x="295" y="351" width="2" height="2" fill="#5ab4f0" /><rect x="298" y="342" width="2" height="2" fill="#5ab4f0" /><rect x="304" y="348" width="2" height="2" fill="#5ab4f0" /><rect x="309" y="339" width="2" height="2" fill="#5ab4f0" /><ellipse cx="303" cy="368" rx="7" ry="5" fill="none" stroke="#e0e0e0" stroke-width="1"/><rect x="295" y="367" width="2" height="2" fill="#5ab4f0" /><rect x="309" y="367" width="2" height="2" fill="#5ab4f0" /><rect x="302" y="362" width="2" height="2" fill="#5ab4f0" /><path d="M308 387 A6.5 4.5 0 1 0 302 394.5" fill="none" stroke="#e0e0e0" stroke-width="1" /><rect x="302" y="389" width="2" height="2" fill="#5ab4f0" /><rect x="308" y="389" width="2" height="2" fill="#5ab4f0" /><rect x="302" y="393" width="2" height="2" fill="#5ab4f0" /><path d="M295.5 405.5 H304 V413.5 H295.5 Z" fill="none" stroke="#e0e0e0" stroke-width="1" /><circle cx="303.5" cy="413.5" r="3.5" fill="#5a5a5a" stroke="#e0e0e0" stroke-width="1" /><path d="M304 402 H308 L310 404 V414 H304 Z" fill="#7ec8f8" stroke="none" stroke-width="1" /><path d="M307 417 L311 413 V417 Z" fill="#000" stroke="none" stroke-width="1" /><path d="M295.5 428.5 H304 V436.5 H295.5 Z" fill="none" stroke="#e0e0e0" stroke-width="1" /><circle cx="303.5" cy="436.5" r="3.5" fill="#5a5a5a" stroke="#e0e0e0" stroke-width="1" /><path d="M308 423 l1 3 l3 -1 l-2 2.5 l2 2.5 l-3 -1 l-1 3 l-1 -3 l-3 1 l2 -2.5 l-2 -2.5 l3 1 z" fill="#f5c040" stroke="none" stroke-width="1" /><rect x="302" y="449" width="2" height="2" fill="#e0e0e0" /><rect x="297" y="454" width="2" height="2" fill="#e0e0e0" /><rect x="307" y="454" width="2" height="2" fill="#e0e0e0" /><rect x="302" y="459" width="2" height="2" fill="#e0e0e0" /><rect x="297.5" y="471.5" width="11" height="11" fill="none" stroke="#e0e0e0" stroke-width="1" /><rect x="298" y="472" width="10" height="10" fill="#3a78b0" /><path d="M298 480 L306 472 M300 482 L308 474 M298 476 L302 472 M304 482 L308 478" fill="none" stroke="#7ec8f8" stroke-width="1" /><path d="M294 471.5 h3 M309 471.5 h3 M294 482.5 h3 M309 482.5 h3 M297.5 468 v3 M308.5 468 v3 M297.5 483 v3 M308.5 483 v3" fill="none" stroke="#e0e0e0" stroke-width="1" /><rect x="297.5" y="493.5" width="11" height="11" fill="none" stroke="#e0e0e0" stroke-width="1" /><rect x="298" y="494" width="10" height="10" fill="url(#g8)" /><path d="M294 493.5 h3 M309 493.5 h3 M294 504.5 h3 M309 504.5 h3 M297.5 490 v3 M308.5 490 v3 M297.5 505 v3 M308.5 505 v3" fill="none" stroke="#e0e0e0" stroke-width="1" /><path d="M295 515 H306 L311 520 V527 H295 Z" fill="#d8d8d8" stroke="none" stroke-width="1" /><circle cx="303" cy="521" r="2.2" fill="#5a5a5a" stroke="none" stroke-width="1" /><rect x="295" y="537" width="16" height="13" fill="#d8d8d8" /><path d="M296 540.5 h14 M296 543.5 h14 M296 546.5 h14 M299.5 541 v9 M305.5 541 v9" fill="none" stroke="#5a5a5a" stroke-width="1" /><text x="303" y="574" font-family="Liberation Sans" font-size="20" fill="#d8d8d8" font-weight="normal" font-style="normal" text-anchor="middle" >A</text><circle cx="298" cy="584" r="3.5" fill="#4cc870" stroke="none" stroke-width="1" /><circle cx="307" cy="593" r="3.8" fill="#5ab4f0" stroke="none" stroke-width="1" /><path d="M302 583.5 H306 V587" fill="none" stroke="#e0e0e0" stroke-width="1.2" /><path d="M304 586 h4 l-2 2.5 z" fill="#e0e0e0" stroke="none" stroke-width="1" /><rect x="296.5" y="612.5" width="11" height="11" fill="none" stroke="#e0e0e0" stroke-width="1" /><circle cx="307" cy="623" r="3" fill="#5a5a5a" stroke="#e0e0e0" stroke-width="1.2" /><path d="M309 625 l3 3" fill="none" stroke="#e0e0e0" stroke-width="1.2" /><path d="M295 637 V634 H298 M308 634 H311 V637 M295 647 V650 H298" fill="none" stroke="#e0e0e0" stroke-width="1.2" /><rect x="298.5" y="637.5" width="9" height="9" fill="none" stroke="#e0e0e0" stroke-width="1" /><circle cx="307" cy="646" r="3" fill="#5a5a5a" stroke="#e0e0e0" stroke-width="1.2" /><path d="M309 648 l3 3" fill="none" stroke="#e0e0e0" stroke-width="1.2" /><path d="M295 663 V656 H310 V663" fill="none" stroke="#5ab4f0" stroke-width="1.2" /><rect x="296.5" y="664.5" width="6" height="6" fill="none" stroke="#e0e0e0" stroke-width="1" /><circle cx="307" cy="668" r="3" fill="#5a5a5a" stroke="#e0e0e0" stroke-width="1.2" /><path d="M309 670 l3 3" fill="none" stroke="#e0e0e0" stroke-width="1.2" /><path d="M296 682 V679 H299 M306 679 H309 V682 M296 689 V692 H299" fill="none" stroke="#e0e0e0" stroke-width="1.2" /><path d="M301 685 h5 M303.5 682.5 v5" fill="none" stroke="#5ab4f0" stroke-width="1.2" /><circle cx="307" cy="690" r="3" fill="#5a5a5a" stroke="#e0e0e0" stroke-width="1.2" /><path d="M309 692 l3 3" fill="none" stroke="#e0e0e0" stroke-width="1.2" /><path d="M295 704 L299 700 H309 V712 L305 715 H295 Z" fill="#5ab4f0" stroke="none" stroke-width="1" /><path d="M295 704 H305 L309 700" fill="none" stroke="#a8dcff" stroke-width="1" /><circle cx="307" cy="712" r="3" fill="#5a5a5a" stroke="#e0e0e0" stroke-width="1.2" /><path d="M309 714 l3 3" fill="none" stroke="#e0e0e0" stroke-width="1.2" /><line x1="292" y1="722.5" x2="315" y2="722.5" stroke="#d8d8d8" stroke-width="1"/><path d="M295 730 h6 M298 727 v6" fill="none" stroke="#e0e0e0" stroke-width="1.5" /><circle cx="306" cy="737" r="3" fill="#5a5a5a" stroke="#e0e0e0" stroke-width="1.2" /><path d="M308 739 l3 3" fill="none" stroke="#e0e0e0" stroke-width="1.2" /><rect x="946" y="150" width="31" height="637" fill="#575757" /><rect x="950" y="150" width="26" height="407" fill="#383838" /><rect x="951" y="151" width="24" height="405" fill="#5a5a5a" /><rect x="951" y="151" width="24" height="8" fill="#4b4b4b" /><path d="M956 154h1v1h-1zM958 154h1v1h-1zM960 154h1v1h-1zM962 154h1v1h-1zM964 154h1v1h-1zM966 154h1v1h-1zM968 154h1v1h-1zM956 156h1v1h-1zM958 156h1v1h-1zM960 156h1v1h-1zM962 156h1v1h-1zM964 156h1v1h-1zM966 156h1v1h-1zM968 156h1v1h-1z" fill="#050505" stroke="none" stroke-width="1" /><rect x="950" y="560" width="26" height="142" fill="#383838" /><rect x="951" y="561" width="24" height="140" fill="#5a5a5a" /><rect x="951" y="561" width="24" height="8" fill="#4b4b4b" /><path d="M956 564h1v1h-1zM958 564h1v1h-1zM960 564h1v1h-1zM962 564h1v1h-1zM964 564h1v1h-1zM966 564h1v1h-1zM968 564h1v1h-1zM956 566h1v1h-1zM958 566h1v1h-1zM960 566h1v1h-1zM962 566h1v1h-1zM964 566h1v1h-1zM966 566h1v1h-1zM968 566h1v1h-1z" fill="#050505" stroke="none" stroke-width="1" /><rect x="950" y="702" width="26" height="44" fill="#585858" /><path d="M956.5 173 L967.5 162 L969.5 164 L958.5 175 Z" fill="#f2c878" stroke="none" stroke-width="1" /><circle cx="957.5" cy="174" r="2.6" fill="#e84848" stroke="none" stroke-width="1" /><line x1="953.5" y1="177.5" x2="957.5" y2="177.5" stroke="#e6e6e6" stroke-width="1"/><line x1="960.5" y1="177.5" x2="969.5" y2="177.5" stroke="#5ab4f0" stroke-width="1"/><circle cx="956.5" cy="187" r="3" fill="none" stroke="#e6e6e6" stroke-width="1" /><path d="M960.5 185.5 H965.0 V190" fill="none" stroke="#e6e6e6" stroke-width="1" /><path d="M963.0 189 h4 l-2 3 z" fill="#e6e6e6" stroke="none" stroke-width="1" /><circle cx="960.0" cy="196" r="3" fill="none" stroke="#5ab4f0" stroke-width="1.1" /><circle cx="966.0" cy="196" r="3" fill="none" stroke="#5ab4f0" stroke-width="1.1" /><path d="M960.0 206 V220 H953.5 Z" fill="none" stroke="#e6e6e6" stroke-width="1" /><path d="M963.0 206 V220 H968.5 Z" fill="none" stroke="#5ab4f0" stroke-width="1" /><path d="M969.5 229.5 H959.5 A6.5 6.5 0 0 0 959.5 242.5 H969.5" fill="none" stroke="#5ab4f0" stroke-width="1.1" /><path d="M969.5 232.5 H960.5 A3.5 3.5 0 0 0 960.5 239.5 H969.5" fill="none" stroke="#e6e6e6" stroke-width="1" /><rect x="954.5" y="251.5" width="5" height="5" fill="none" stroke="#e6e6e6" stroke-width="1" /><rect x="962.5" y="251.5" width="5" height="5" fill="none" stroke="#5ab4f0" stroke-width="1" /><rect x="954.5" y="259.5" width="5" height="5" fill="none" stroke="#5ab4f0" stroke-width="1" /><rect x="962.5" y="259.5" width="5" height="5" fill="none" stroke="#5ab4f0" stroke-width="1" /><path d="M964.5 267 L969.5 262 V267 Z" fill="#000" stroke="none" stroke-width="1" /><path d="M961.5 273 V287 M954.5 280 H968.5" fill="none" stroke="#e6e6e6" stroke-width="1.6" /><path d="M961.5 271 l-3.5 4 h7 z M961.5 289 l-3.5 -4 h7 z M952.5 280 l4 -3.5 v7 z M970.5 280 l-4 -3.5 v7 z" fill="#e6e6e6" stroke="none" stroke-width="1" /><path d="M963.5 295.5 A6.8 6.8 0 1 0 968.0 300" fill="none" stroke="#e6e6e6" stroke-width="1.1" /><path d="M960.5 292.5 L965.5 295.5 L961.5 299" fill="#e6e6e6" stroke="none" stroke-width="1" /><path d="M954.0 322 V316.5 H969.0 V331.5 H962.5" fill="none" stroke="#5ab4f0" stroke-width="1.1" /><rect x="953.5" y="323.5" width="8" height="8" fill="none" stroke="#e6e6e6" stroke-width="1" /><path d="M954.0 338.5 H960.0 V353.5 H954.0 Z" fill="none" stroke="#e6e6e6" stroke-width="1" /><path d="M962.5 338.5 H964.5 L969.5 353.5 H962.5" fill="none" stroke="#5ab4f0" stroke-width="1.1" /><path d="M956.5 348.5 H962.5" fill="none" stroke="#e6e6e6" stroke-width="1" /><path d="M965.5 348.5 l-3.5 -2.5 v5 z" fill="#e6e6e6" stroke="none" stroke-width="1" /><path d="M952.5 360.5 H962.5" fill="none" stroke="#5ab4f0" stroke-width="1" stroke-dasharray="2 1"/><path d="M964.5 360.5 H969.5" fill="none" stroke="#e6e6e6" stroke-width="1" /><path d="M957.5 362 L964.5 371 M964.5 362 L959.5 371" fill="none" stroke="#e6e6e6" stroke-width="1.3" /><circle cx="958.0" cy="374" r="2.3" fill="none" stroke="#e6e6e6" stroke-width="1.1" /><circle cx="965.5" cy="373" r="2.3" fill="none" stroke="#e6e6e6" stroke-width="1.1" /><line x1="968.5" y1="382" x2="968.5" y2="398" stroke="#e6e6e6" stroke-width="1.2"/><path d="M952.5 394.5 H966.5" fill="none" stroke="#5ab4f0" stroke-width="1" stroke-dasharray="2 1.5"/><path d="M952.5 394.5 H955.5" fill="none" stroke="#e6e6e6" stroke-width="1" /><path d="M956.5 388.5 H964.5" fill="none" stroke="#e6e6e6" stroke-width="1" /><path d="M966.5 388.5 l-4 -2.5 v5 z" fill="#e6e6e6" stroke="none" stroke-width="1" /><path d="M954.0 406 V417.5 H969.0 V406 H963.5" fill="none" stroke="#e6e6e6" stroke-width="1" /><path d="M954.0 406 H960.5" fill="none" stroke="#e6e6e6" stroke-width="1" /><line x1="961.5" y1="402" x2="961.5" y2="407" stroke="#5ab4f0" stroke-width="1"/><path d="M958.5 428 H954.0 V439.5 H969.0 V428 H964.5" fill="none" stroke="#e6e6e6" stroke-width="1" /><line x1="959.5" y1="424" x2="959.5" y2="430" stroke="#5ab4f0" stroke-width="1"/><line x1="963.5" y1="424" x2="963.5" y2="430" stroke="#5ab4f0" stroke-width="1"/><line x1="953.5" y1="456.5" x2="969.5" y2="456.5" stroke="#e6e6e6" stroke-width="1.2"/><path d="M956.5 452.5 L961.5 456.5 L956.5 460.5 Z M966.5 452.5 L961.5 456.5 L966.5 460.5 Z" fill="#5ab4f0" stroke="none" stroke-width="1" /><path d="M954.0 485 V480" fill="none" stroke="#e6e6e6" stroke-width="1" /><path d="M954.5 478 L961.5 471" fill="none" stroke="#5ab4f0" stroke-width="1.2" /><path d="M963.5 469.5 H968.5" fill="none" stroke="#e6e6e6" stroke-width="1" /><path d="M954.0 507 V502" fill="none" stroke="#e6e6e6" stroke-width="1" /><path d="M954.0 500 Q954.0 491.5 961.5 491.5" fill="none" stroke="#5ab4f0" stroke-width="1.2" /><path d="M963.5 491.5 H968.5" fill="none" stroke="#e6e6e6" stroke-width="1" /><path d="M953.5 529 L954.5 526 M968.5 516 L969.5 513" fill="none" stroke="#e6e6e6" stroke-width="1.2" /><path d="M954.5 524 Q957.5 517 961.5 521 Q965.5 525 967.5 518" fill="none" stroke="#5ab4f0" stroke-width="1.2" /><path d="M954.0 538.5 H965.0 V549.5 H954.0 Z M954.0 538.5 L958.0 534.5 H969.0 V545.5 L965.0 549.5 M965.0 538.5 L969.0 534.5" fill="none" stroke="#5ab4f0" stroke-width="1" /><rect x="956.5" y="541.5" width="6" height="6" fill="none" stroke="#e6e6e6" stroke-width="1" /><rect x="955.5" y="569" width="10" height="8" fill="#f0f0f0" /><rect x="958.5" y="572" width="11" height="10" fill="#5ab4f0" /><path d="M953.5 567 h4" fill="none" stroke="#f0f0f0" stroke-width="1.3" /><rect x="953.5" y="592" width="7" height="6" fill="#f0f0f0" /><rect x="957.5" y="595" width="10" height="8" fill="#5ab4f0" /><rect x="963.5" y="601" width="6" height="5" fill="#f0f0f0" /><rect x="953.5" y="614" width="8" height="7" fill="#f0f0f0" /><rect x="958.5" y="617" width="11" height="10" fill="#5ab4f0" /><rect x="953.5" y="636" width="10" height="8" fill="#d0d0d0" /><rect x="959.5" y="641" width="10" height="8" fill="#5ab4f0" /><line x1="951" y1="655.5" x2="975" y2="655.5" stroke="#d8d8d8" stroke-width="1"/><text x="960.5" y="667" font-family="Liberation Sans" font-size="7" fill="#5ab4f0" font-weight="bold" font-style="normal" text-anchor="middle" >ABC</text><rect x="954.5" y="669" width="13" height="8" fill="#f0f0f0" /><path d="M964.5 677 L970.5 671 V677 Z" fill="#111" stroke="none" stroke-width="1" /><rect x="953.5" y="684" width="11" height="9" fill="#d8d8d8" /><path d="M959.5 698 H969.5 V688 M962.5 696 L968.5 690 M964.5 698 L969.5 693" fill="none" stroke="#5ab4f0" stroke-width="1" /><path d="M335.5 679 V729.5 H386" fill="none" stroke="#000" stroke-width="1" /><rect x="331.5" y="724.5" width="9" height="9" fill="none" stroke="#000" stroke-width="1" /><path d="M337.5 662 L343.5 668 L349.5 662 M343.5 668 V675" fill="none" stroke="#000" stroke-width="1.2" /><path d="M390 715 L403 728 M403 715 L390 728" fill="none" stroke="#000" stroke-width="1.2" /><rect x="289" y="745" width="688" height="44" fill="#585858" /><rect x="291" y="747" width="686" height="40" fill="#3a3a3a" /><rect x="292" y="747" width="53" height="39" fill="url(#g9)" /><rect x="345" y="748" width="632" height="38" fill="#ffffff" /><path d="M296 759h2v2h-2zM299 759h2v2h-2zM296 762h2v2h-2zM299 762h2v2h-2zM296 765h2v2h-2zM299 765h2v2h-2zM296 768h2v2h-2zM299 768h2v2h-2zM296 771h2v2h-2zM299 771h2v2h-2zM296 774h2v2h-2zM299 774h2v2h-2z" fill="#9a9a9a" stroke="none" stroke-width="1" /><path d="M306.5 764 L314.5 772 M314.5 764 L306.5 772" fill="none" stroke="#ffffff" stroke-width="2" /><path d="M328 763 A3.5 3.5 0 1 0 333 768 L339 774 L341 772 L335 766 A3.5 3.5 0 0 0 330 761 L332 764 L331 766 L329 766 Z" fill="#f0f0f0" stroke="#222" stroke-width="0.6" /><rect x="350" y="761" width="14" height="13" fill="#dfe3e8" stroke="#8a95a0" stroke-width="1" rx="1"/><path d="M353 764 l3 2.5 l-3 2.5 M357 771 h4" fill="none" stroke="#222" stroke-width="1.2" /><path d="M369 766 h5 l-2.5 3 z" fill="#777" stroke="none" stroke-width="1" /><text x="381" y="771" font-family="Liberation Mono" font-size="12" fill="#8e8e8e" font-weight="normal" font-style="italic" text-anchor="start" textLength="104" lengthAdjust="spacingAndGlyphs" >Введите команду</text><rect x="14" y="787" width="963" height="21" fill="#3a3a3a" /><rect x="14" y="783" width="277" height="6" fill="#4a4a4a" /><path d="M94 789 Q97.0 789 97.5 795 L98.25 801 Q99 805 103 805 H140 Q144 805 144.75 801 L145.5 795 Q146.0 789 149 789 Z" fill="#555555" stroke="none" stroke-width="1" /><path d="M149 789 Q152.0 789 152.5 795 L153.25 801 Q154 805 158 805 H197 Q201 805 201.75 801 L202.5 795 Q203.0 789 206 789 Z" fill="#555555" stroke="none" stroke-width="1" /><path d="M210 805 Q214 805 215 800 L217 794 Q218 789 223 789 H232 Q229 791 229 796 L228 801 Q227 805 223 805 Z" fill="#555555" stroke="none" stroke-width="1" /><path d="M22 789 Q26.8 789 27.6 795 L28.8 801 Q30 805 34 805 H85 Q89 805 90.2 801 L91.4 795 Q92.2 789 97 789 Z" fill="url(#g10)" stroke="none" stroke-width="1" /><text x="37" y="800" font-family="Liberation Sans" font-size="12" fill="#ffffff" font-weight="bold" font-style="normal" text-anchor="start" textLength="46" lengthAdjust="spacingAndGlyphs" >Модель</text><text x="106" y="801" font-family="Liberation Sans" font-size="13" fill="#a8a8a8" font-weight="normal" font-style="normal" text-anchor="start" textLength="31" lengthAdjust="spacingAndGlyphs" >Лист1</text><text x="160" y="801" font-family="Liberation Sans" font-size="13" fill="#a8a8a8" font-weight="normal" font-style="normal" text-anchor="start" textLength="32" lengthAdjust="spacingAndGlyphs" >Лист2</text><path d="M219 797 h7 M222.5 793.5 v7" fill="none" stroke="#d0d0d0" stroke-width="2" /><rect x="14" y="808" width="963" height="28" fill="#3a3a3a" /><rect x="243" y="809" width="152" height="26" fill="#6a6a6a" /><rect x="244" y="810" width="150" height="24" fill="#4a4a4a" /><rect x="396" y="809" width="58" height="26" fill="#6a6a6a" /><rect x="397" y="810" width="56" height="24" fill="#4a4a4a" /><rect x="456" y="809" width="63" height="26" fill="#6a6a6a" /><rect x="457" y="810" width="61" height="24" fill="#4a4a4a" /><rect x="521" y="809" width="25" height="26" fill="#6a6a6a" /><rect x="522" y="810" width="23" height="24" fill="#4a4a4a" /><rect x="546" y="809" width="103" height="26" fill="#6a6a6a" /><rect x="547" y="810" width="101" height="24" fill="#4a4a4a" /><rect x="650" y="809" width="62" height="26" fill="#6a6a6a" /><rect x="651" y="810" width="60" height="24" fill="#4a4a4a" /><rect x="713" y="809" width="25" height="26" fill="#6a6a6a" /><rect x="714" y="810" width="23" height="24" fill="#4a4a4a" /><rect x="741" y="809" width="81" height="26" fill="#6a6a6a" /><rect x="742" y="810" width="79" height="24" fill="#4a4a4a" /><rect x="824" y="809" width="40" height="26" fill="#6a6a6a" /><rect x="825" y="810" width="38" height="24" fill="#4a4a4a" /><rect x="867" y="809" width="25" height="26" fill="#6a6a6a" /><rect x="868" y="810" width="23" height="24" fill="#4a4a4a" /><rect x="894" y="809" width="31" height="26" fill="#6a6a6a" /><rect x="895" y="810" width="29" height="24" fill="#4a4a4a" /><rect x="927" y="809" width="49" height="26" fill="#6a6a6a" /><rect x="928" y="810" width="47" height="24" fill="#4a4a4a" /><text x="253" y="827" font-family="Liberation Sans" font-size="14" fill="#f4f4f4" font-weight="normal" font-style="normal" text-anchor="start" textLength="136" lengthAdjust="spacingAndGlyphs" >23.7811, 191.6831, 0.0000</text><text x="400" y="827" font-family="Liberation Sans" font-size="14" fill="#f4f4f4" font-weight="normal" font-style="normal" text-anchor="start" textLength="49" lengthAdjust="spacingAndGlyphs" >МОДЕЛЬ</text><path d="M463.5 814 V830 M467.5 814 V830 M471.5 814 V830 M460 817.5 H475 M460 821.5 H475 M460 825.5 H475" fill="none" stroke="#e8e8e8" stroke-width="1.2" /><rect x="487" y="817" width="2" height="2" fill="#e8e8e8" /><rect x="487" y="822" width="2" height="2" fill="#e8e8e8" /><rect x="487" y="827" width="2" height="2" fill="#e8e8e8" /><rect x="492" y="817" width="2" height="2" fill="#e8e8e8" /><rect x="492" y="822" width="2" height="2" fill="#e8e8e8" /><rect x="492" y="827" width="2" height="2" fill="#e8e8e8" /><rect x="497" y="817" width="2" height="2" fill="#e8e8e8" /><rect x="497" y="822" width="2" height="2" fill="#e8e8e8" /><rect x="497" y="827" width="2" height="2" fill="#e8e8e8" /><path d="M509 820 h7 l-3.5 4 z" fill="#e8e8e8" stroke="none" stroke-width="1" /><path d="M527 818 h5 M529.5 815.5 v5" fill="none" stroke="#e8e8e8" stroke-width="1.2" /><rect x="530" y="822" width="13" height="5" fill="#e8e8e8" /><path d="M552 814 V829 H567 M552 823 H558 V829" fill="none" stroke="#e8e8e8" stroke-width="1.2" /><circle cx="582" cy="822" r="6" fill="none" stroke="#e8e8e8" stroke-width="1.2" /><path d="M576 826 L590 815 M582 822 H592" fill="none" stroke="#e8e8e8" stroke-width="1.2" /><path d="M601 820 h7 l-3.5 4 z" fill="#e8e8e8" stroke="none" stroke-width="1" /><path d="M615 814 L629 829" fill="none" stroke="#e04040" stroke-width="1.3" /><path d="M622 813 V830" fill="none" stroke="#40c040" stroke-width="1.3" /><rect x="620.5" y="820.5" width="3" height="3" fill="#4a4a4a" stroke="#e8e8e8" stroke-width="1" /><path d="M640 820 h7 l-3.5 4 z" fill="#e8e8e8" stroke="none" stroke-width="1" /><path d="M654 829 L669 816 M654 829 H669" fill="none" stroke="#e8e8e8" stroke-width="1.2" /><rect x="660" y="821" width="3" height="3" fill="#e8e8e8" /><rect x="679.5" y="815.5" width="2" height="2" fill="none" stroke="#f0a060" stroke-width="1" /><path d="M683 818 H695 V830 H682 V819" fill="none" stroke="#e8e8e8" stroke-width="1.2" /><path d="M704 820 h7 l-3.5 4 z" fill="#e8e8e8" stroke="none" stroke-width="1" /><rect x="718" y="815" width="14" height="3" fill="#e8e8e8" /><rect x="718" y="820" width="10" height="3" fill="#e8e8e8" /><rect x="718" y="825" width="14" height="3" fill="#e8e8e8" /><rect x="722" y="815" width="10" height="13" fill="none" stroke="#4a4a4a"/><rect x="742" y="810" width="22" height="23" fill="#5b8fcc" /><path d="M747 830 L752 816 L757 830 L752 826 Z" fill="#f4f4f4" stroke="none" stroke-width="1" /><circle cx="758" cy="816" r="2.8" fill="none" stroke="#f4f4f4" stroke-width="1.2" /><path d="M769 830 L774 816 L779 830 L774 826 Z" fill="#c8c8c8" stroke="none" stroke-width="1" /><text x="794" y="827" font-family="Liberation Sans" font-size="13" fill="#e8e8e8" font-weight="normal" font-style="normal" text-anchor="start" textLength="16" lengthAdjust="spacingAndGlyphs" >1:1</text><path d="M812 820 h7 l-3.5 4 z" fill="#e8e8e8" stroke="none" stroke-width="1" /><circle cx="837" cy="822" r="5" fill="none" stroke="#e8e8e8" stroke-width="3" /><circle cx="837" cy="822" r="2" fill="#4a4a4a" stroke="none" stroke-width="1" /><path d="M837 814 v3 M837 827 v3 M829 822 h3 M842 822 h3 M831.5 816.5 l2 2 M840.5 825.5 l2 2 M842.5 816.5 l-2 2 M833.5 825.5 l-2 2" fill="none" stroke="#e8e8e8" stroke-width="2" /><path d="M853 820 h7 l-3.5 4 z" fill="#e8e8e8" stroke="none" stroke-width="1" /><rect x="872.5" y="814.5" width="7" height="7" fill="none" stroke="#e8e8e8" stroke-width="1" /><circle cx="885" cy="818" r="4" fill="none" stroke="#e8e8e8" stroke-width="1.2" /><path d="M877 826 l4 5 h-8 z" fill="none" stroke="#e8e8e8" stroke-width="1.2" /><rect x="902" y="814" width="18" height="13" fill="#f0f0f0" /><path d="M903 823 L908 817 L912 821 L916 817 L919 821" fill="none" stroke="#4a90d8" stroke-width="1.2" /><path d="M912 832 L916 824 L920 832 Z" fill="#e87020" stroke="none" stroke-width="1" /><rect x="915.5" y="827" width="1" height="3" fill="#fff" /><rect x="931.5" y="815.5" width="16" height="13" fill="none" stroke="#e8e8e8" stroke-width="1" /><path d="M934 826 l4 -4 M934 826 h3 M934 826 v-3 M945 818 l-4 4 M945 818 h-3 M945 818 v3" fill="none" stroke="#e8e8e8" stroke-width="1.2" /><rect x="956" y="814" width="15" height="2" fill="#e8e8e8" /><rect x="956" y="821" width="15" height="2" fill="#e8e8e8" /><rect x="956" y="828" width="15" height="2" fill="#e8e8e8" /><g fill="none" stroke="#000" stroke-width="1" shape-rendering="crispEdges"><path d="M369.6 306.4 C366.2 302.6 360.7 297.5 358.1 292.1 C355.4 286.6 354.1 279.9 353.6 273.9 C353.1 267.8 353.6 262.5 355.0 255.7 C356.5 249.0 358.9 240.4 362.1 233.5 C365.3 226.6 369.5 219.9 374.2 214.4 C378.9 208.8 384.3 204.3 390.4 200.2 C396.4 196.2 403.8 192.8 410.5 190.1 C417.3 187.4 424.0 185.6 430.7 184.1 C437.5 182.6 442.8 181.6 450.9 181.1 C459.0 180.5 469.1 180.7 479.2 181.1 C489.3 181.4 499.7 181.9 511.5 183.1 C523.2 184.2 540.0 186.8 549.8 188.1 C559.6 189.5 561.1 189.1 570.3 191.1 C579.4 193.2 594.5 196.7 604.6 200.2 C614.7 203.8 623.8 207.8 630.8 212.3 C637.9 216.9 641.9 221.9 647.0 227.5 C652.0 233.0 657.7 239.2 661.1 245.6 C664.5 252.0 665.8 258.8 667.1 265.8 C668.5 272.9 668.7 281.3 669.2 288.0 C669.7 294.7 669.5 297.0 670.2 306.2 C670.8 315.4 670.7 332.4 673.2 343.3 C675.7 354.1 680.6 364.6 685.3 371.5 C690.0 378.4 695.4 380.8 701.5 384.6 C707.5 388.5 715.2 391.9 721.6 394.7 C728.0 397.6 733.0 399.6 739.8 401.8 C746.6 404.0 753.8 405.8 762.3 407.9 C770.7 410.0 780.8 412.1 790.5 414.5 C800.3 417.0 810.7 419.2 820.8 422.6 C830.9 426.0 842.7 430.5 851.1 434.7 C859.5 438.9 865.2 443.3 871.3 447.8 C877.3 452.4 882.4 456.6 887.4 462.0 C892.5 467.3 898.2 475.5 901.5 480.1 C904.9 484.8 904.8 485.0 907.5 490.0 C910.2 495.0 914.7 502.8 917.6 510.2 C920.5 517.6 923.0 526.0 924.7 534.4 C926.3 542.8 927.5 551.9 927.7 560.6 C927.9 569.4 927.0 578.5 925.7 586.9 C924.3 595.3 923.0 602.0 919.6 611.1 C916.2 620.2 910.6 632.7 905.1 641.4 C899.7 650.2 893.7 656.9 887.0 663.6 C880.2 670.3 872.5 676.1 864.8 681.8 C857.0 687.5 849.6 692.9 840.5 697.9 C831.5 703.0 818.4 708.5 810.3 712.1 C802.1 715.6 799.7 716.8 791.5 719.1 C783.4 721.4 770.4 724.4 761.3 725.8 C752.2 727.2 745.5 728.0 737.1 727.6 C728.6 727.2 719.6 725.7 710.8 723.2 C702.1 720.6 692.3 716.6 684.6 712.1 C676.8 707.5 670.1 702.6 664.4 695.9 C658.7 689.2 653.8 680.1 650.3 671.7 C646.7 663.3 645.2 654.2 643.2 645.5 C641.2 636.7 639.8 627.6 638.2 619.2 C636.5 610.8 634.4 600.5 633.1 595.0 C631.8 589.5 632.2 590.0 630.4 586.2 C628.6 582.4 626.0 576.1 622.3 572.1 C618.6 568.0 613.5 564.2 608.2 562.0 C602.8 559.7 597.4 558.8 590.0 558.3 C582.6 557.8 570.9 558.3 563.5 558.9 C556.0 559.5 554.1 560.1 545.3 562.0 C536.6 563.8 521.8 567.5 511.0 570.0 C500.2 572.6 490.5 574.9 480.7 577.1 C471.0 579.3 460.5 582.0 452.5 583.2 C444.4 584.3 438.0 584.9 432.3 583.8 C426.6 582.6 421.4 580.1 418.2 576.1 C415.0 572.1 414.0 566.0 413.1 559.9 C412.3 553.9 412.4 547.2 413.1 539.8 C413.8 532.4 415.3 524.6 417.2 515.5 C419.0 506.5 422.2 495.4 424.2 485.3 C426.2 475.2 428.0 463.9 429.3 455.0 C430.5 446.1 431.1 439.2 431.7 432.1 C432.4 424.9 433.0 418.6 433.1 411.9 C433.3 405.1 433.5 398.1 432.7 391.7 C432.0 385.3 430.7 379.2 428.7 373.5 C426.7 367.8 424.0 362.8 420.6 357.4 C417.3 352.0 413.2 346.4 408.5 341.2 C403.8 336.0 397.4 330.5 392.4 326.1 C387.3 321.7 382.1 318.3 378.3 315.0 C374.5 311.7 372.9 310.2 369.6 306.4 Z"/><path d="M549.8 265.8 C545.0 265.8 538.0 266.0 531.6 266.8 C525.2 267.7 517.5 268.7 511.5 270.9 C505.4 273.0 499.3 276.7 495.3 279.9 C491.3 283.1 488.9 286.7 487.2 290.0 C485.6 293.4 485.0 295.8 485.2 300.1 C485.4 304.5 486.6 310.8 488.2 316.3 C489.9 321.8 493.3 326.6 495.3 333.2 C497.3 339.7 499.2 348.3 500.4 355.4 C501.5 362.4 502.2 368.8 502.4 375.5 C502.5 382.3 501.5 389.0 501.4 395.7 C501.2 402.5 501.2 409.2 501.4 415.9 C501.5 422.6 501.0 430.4 502.4 436.1 C503.7 441.8 506.2 447.0 509.4 450.2 C512.6 453.4 516.5 454.5 521.5 455.3 C526.6 456.0 532.6 456.2 539.7 454.9 C546.8 453.5 557.4 450.3 564.2 447.2 C571.0 444.1 575.7 440.3 580.4 436.1 C585.1 431.9 589.1 427.7 592.5 422.0 C595.8 416.2 598.4 408.8 600.5 401.8 C602.7 394.7 604.1 387.3 605.6 379.6 C607.1 371.8 608.5 362.8 609.6 355.4 C610.7 348.0 611.9 342.7 612.3 335.2 C612.6 327.7 612.6 317.1 611.6 310.2 C610.7 303.4 609.1 299.1 606.6 294.1 C604.1 289.0 600.9 283.6 596.5 279.9 C592.1 276.2 586.4 274.1 580.4 271.9 C574.3 269.7 565.3 267.8 560.2 266.8 C555.1 265.8 554.6 265.8 549.8 265.8 Z"/><path d="M692.9 584.2 C690.3 578.7 685.5 569.4 682.8 562.0 C680.2 554.6 678.2 546.8 677.2 539.8 C676.2 532.7 676.3 525.6 676.8 519.6 C677.2 513.5 677.8 508.3 679.8 503.4 C681.8 498.6 685.0 493.7 688.9 490.3 C692.8 487.0 697.6 484.8 703.0 483.3 C708.4 481.7 713.8 481.1 721.2 481.2 C728.6 481.4 739.0 482.6 747.4 484.3 C755.8 485.9 759.4 486.3 771.6 491.3 C783.9 496.3 809.5 507.0 820.7 514.2 C831.9 521.4 834.9 527.7 838.9 534.4 C842.9 541.1 844.6 547.5 844.9 554.6 C845.3 561.6 843.9 569.4 840.9 576.8 C837.9 584.2 832.2 592.3 826.8 599.0 C821.4 605.7 815.3 612.1 808.6 617.1 C801.9 622.2 793.8 626.6 786.4 629.3 C779.0 631.9 773.1 634.3 764.2 633.3 C755.3 632.3 741.6 627.3 733.0 623.3 C724.5 619.2 718.6 613.8 712.8 609.1 C707.1 604.4 702.0 599.2 698.7 595.0 C695.4 590.8 695.6 589.7 692.9 584.2 Z"/></g><g fill="none" stroke="#000" stroke-width="1.7" opacity="0.3"><path d="M369.6 306.4 C366.2 302.6 360.7 297.5 358.1 292.1 C355.4 286.6 354.1 279.9 353.6 273.9 C353.1 267.8 353.6 262.5 355.0 255.7 C356.5 249.0 358.9 240.4 362.1 233.5 C365.3 226.6 369.5 219.9 374.2 214.4 C378.9 208.8 384.3 204.3 390.4 200.2 C396.4 196.2 403.8 192.8 410.5 190.1 C417.3 187.4 424.0 185.6 430.7 184.1 C437.5 182.6 442.8 181.6 450.9 181.1 C459.0 180.5 469.1 180.7 479.2 181.1 C489.3 181.4 499.7 181.9 511.5 183.1 C523.2 184.2 540.0 186.8 549.8 188.1 C559.6 189.5 561.1 189.1 570.3 191.1 C579.4 193.2 594.5 196.7 604.6 200.2 C614.7 203.8 623.8 207.8 630.8 212.3 C637.9 216.9 641.9 221.9 647.0 227.5 C652.0 233.0 657.7 239.2 661.1 245.6 C664.5 252.0 665.8 258.8 667.1 265.8 C668.5 272.9 668.7 281.3 669.2 288.0 C669.7 294.7 669.5 297.0 670.2 306.2 C670.8 315.4 670.7 332.4 673.2 343.3 C675.7 354.1 680.6 364.6 685.3 371.5 C690.0 378.4 695.4 380.8 701.5 384.6 C707.5 388.5 715.2 391.9 721.6 394.7 C728.0 397.6 733.0 399.6 739.8 401.8 C746.6 404.0 753.8 405.8 762.3 407.9 C770.7 410.0 780.8 412.1 790.5 414.5 C800.3 417.0 810.7 419.2 820.8 422.6 C830.9 426.0 842.7 430.5 851.1 434.7 C859.5 438.9 865.2 443.3 871.3 447.8 C877.3 452.4 882.4 456.6 887.4 462.0 C892.5 467.3 898.2 475.5 901.5 480.1 C904.9 484.8 904.8 485.0 907.5 490.0 C910.2 495.0 914.7 502.8 917.6 510.2 C920.5 517.6 923.0 526.0 924.7 534.4 C926.3 542.8 927.5 551.9 927.7 560.6 C927.9 569.4 927.0 578.5 925.7 586.9 C924.3 595.3 923.0 602.0 919.6 611.1 C916.2 620.2 910.6 632.7 905.1 641.4 C899.7 650.2 893.7 656.9 887.0 663.6 C880.2 670.3 872.5 676.1 864.8 681.8 C857.0 687.5 849.6 692.9 840.5 697.9 C831.5 703.0 818.4 708.5 810.3 712.1 C802.1 715.6 799.7 716.8 791.5 719.1 C783.4 721.4 770.4 724.4 761.3 725.8 C752.2 727.2 745.5 728.0 737.1 727.6 C728.6 727.2 719.6 725.7 710.8 723.2 C702.1 720.6 692.3 716.6 684.6 712.1 C676.8 707.5 670.1 702.6 664.4 695.9 C658.7 689.2 653.8 680.1 650.3 671.7 C646.7 663.3 645.2 654.2 643.2 645.5 C641.2 636.7 639.8 627.6 638.2 619.2 C636.5 610.8 634.4 600.5 633.1 595.0 C631.8 589.5 632.2 590.0 630.4 586.2 C628.6 582.4 626.0 576.1 622.3 572.1 C618.6 568.0 613.5 564.2 608.2 562.0 C602.8 559.7 597.4 558.8 590.0 558.3 C582.6 557.8 570.9 558.3 563.5 558.9 C556.0 559.5 554.1 560.1 545.3 562.0 C536.6 563.8 521.8 567.5 511.0 570.0 C500.2 572.6 490.5 574.9 480.7 577.1 C471.0 579.3 460.5 582.0 452.5 583.2 C444.4 584.3 438.0 584.9 432.3 583.8 C426.6 582.6 421.4 580.1 418.2 576.1 C415.0 572.1 414.0 566.0 413.1 559.9 C412.3 553.9 412.4 547.2 413.1 539.8 C413.8 532.4 415.3 524.6 417.2 515.5 C419.0 506.5 422.2 495.4 424.2 485.3 C426.2 475.2 428.0 463.9 429.3 455.0 C430.5 446.1 431.1 439.2 431.7 432.1 C432.4 424.9 433.0 418.6 433.1 411.9 C433.3 405.1 433.5 398.1 432.7 391.7 C432.0 385.3 430.7 379.2 428.7 373.5 C426.7 367.8 424.0 362.8 420.6 357.4 C417.3 352.0 413.2 346.4 408.5 341.2 C403.8 336.0 397.4 330.5 392.4 326.1 C387.3 321.7 382.1 318.3 378.3 315.0 C374.5 311.7 372.9 310.2 369.6 306.4 Z"/><path d="M549.8 265.8 C545.0 265.8 538.0 266.0 531.6 266.8 C525.2 267.7 517.5 268.7 511.5 270.9 C505.4 273.0 499.3 276.7 495.3 279.9 C491.3 283.1 488.9 286.7 487.2 290.0 C485.6 293.4 485.0 295.8 485.2 300.1 C485.4 304.5 486.6 310.8 488.2 316.3 C489.9 321.8 493.3 326.6 495.3 333.2 C497.3 339.7 499.2 348.3 500.4 355.4 C501.5 362.4 502.2 368.8 502.4 375.5 C502.5 382.3 501.5 389.0 501.4 395.7 C501.2 402.5 501.2 409.2 501.4 415.9 C501.5 422.6 501.0 430.4 502.4 436.1 C503.7 441.8 506.2 447.0 509.4 450.2 C512.6 453.4 516.5 454.5 521.5 455.3 C526.6 456.0 532.6 456.2 539.7 454.9 C546.8 453.5 557.4 450.3 564.2 447.2 C571.0 444.1 575.7 440.3 580.4 436.1 C585.1 431.9 589.1 427.7 592.5 422.0 C595.8 416.2 598.4 408.8 600.5 401.8 C602.7 394.7 604.1 387.3 605.6 379.6 C607.1 371.8 608.5 362.8 609.6 355.4 C610.7 348.0 611.9 342.7 612.3 335.2 C612.6 327.7 612.6 317.1 611.6 310.2 C610.7 303.4 609.1 299.1 606.6 294.1 C604.1 289.0 600.9 283.6 596.5 279.9 C592.1 276.2 586.4 274.1 580.4 271.9 C574.3 269.7 565.3 267.8 560.2 266.8 C555.1 265.8 554.6 265.8 549.8 265.8 Z"/><path d="M692.9 584.2 C690.3 578.7 685.5 569.4 682.8 562.0 C680.2 554.6 678.2 546.8 677.2 539.8 C676.2 532.7 676.3 525.6 676.8 519.6 C677.2 513.5 677.8 508.3 679.8 503.4 C681.8 498.6 685.0 493.7 688.9 490.3 C692.8 487.0 697.6 484.8 703.0 483.3 C708.4 481.7 713.8 481.1 721.2 481.2 C728.6 481.4 739.0 482.6 747.4 484.3 C755.8 485.9 759.4 486.3 771.6 491.3 C783.9 496.3 809.5 507.0 820.7 514.2 C831.9 521.4 834.9 527.7 838.9 534.4 C842.9 541.1 844.6 547.5 844.9 554.6 C845.3 561.6 843.9 569.4 840.9 576.8 C837.9 584.2 832.2 592.3 826.8 599.0 C821.4 605.7 815.3 612.1 808.6 617.1 C801.9 622.2 793.8 626.6 786.4 629.3 C779.0 631.9 773.1 634.3 764.2 633.3 C755.3 632.3 741.6 627.3 733.0 623.3 C724.5 619.2 718.6 613.8 712.8 609.1 C707.1 604.4 702.0 599.2 698.7 595.0 C695.4 590.8 695.6 589.7 692.9 584.2 Z"/></g><path d="M447 188h4v1h1v3h-1v1h-4v-1h-1v-3h1zM447 189v3h4v-3zM491 190h4v1h1v3h-1v1h-4v-1h-1v-3h1zM491 191v3h4v-3zM512 186h4v1h1v3h-1v1h-4v-1h-1v-3h1zM512 187v3h4v-3zM424 206h4v1h1v3h-1v1h-4v-1h-1v-3h1zM424 207v3h4v-3zM396 213h4v1h1v3h-1v1h-4v-1h-1v-3h1zM396 214v3h4v-3zM443 211h4v1h1v3h-1v1h-4v-1h-1v-3h1zM443 212v3h4v-3zM463 204h4v1h1v3h-1v1h-4v-1h-1v-3h1zM463 205v3h4v-3zM489 213h4v1h1v3h-1v1h-4v-1h-1v-3h1zM489 214v3h4v-3zM517 206h4v1h1v3h-1v1h-4v-1h-1v-3h1zM517 207v3h4v-3zM536 211h4v1h1v3h-1v1h-4v-1h-1v-3h1zM536 212v3h4v-3zM382 230h4v1h1v3h-1v1h-4v-1h-1v-3h1zM382 231v3h4v-3zM417 228h4v1h1v3h-1v1h-4v-1h-1v-3h1zM417 229v3h4v-3zM450 234h4v1h1v3h-1v1h-4v-1h-1v-3h1zM450 235v3h4v-3zM475 230h4v1h1v3h-1v1h-4v-1h-1v-3h1zM475 231v3h4v-3zM509 228h4v1h1v3h-1v1h-4v-1h-1v-3h1zM509 229v3h4v-3zM543 234h4v1h1v3h-1v1h-4v-1h-1v-3h1zM543 235v3h4v-3zM403 244h4v1h1v3h-1v1h-4v-1h-1v-3h1zM403 245v3h4v-3zM496 244h4v1h1v3h-1v1h-4v-1h-1v-3h1zM496 245v3h4v-3zM373 251h4v1h1v3h-1v1h-4v-1h-1v-3h1zM373 252v3h4v-3zM424 255h4v1h1v3h-1v1h-4v-1h-1v-3h1zM424 256v3h4v-3zM447 258h4v1h1v3h-1v1h-4v-1h-1v-3h1zM447 259v3h4v-3zM466 251h4v1h1v3h-1v1h-4v-1h-1v-3h1zM466 252v3h4v-3zM489 260h4v1h1v3h-1v1h-4v-1h-1v-3h1zM489 261v3h4v-3zM517 255h4v1h1v3h-1v1h-4v-1h-1v-3h1zM517 256v3h4v-3zM540 258h4v1h1v3h-1v1h-4v-1h-1v-3h1zM540 259v3h4v-3zM380 274h4v1h1v3h-1v1h-4v-1h-1v-3h1zM380 275v3h4v-3zM398 283h4v1h1v3h-1v1h-4v-1h-1v-3h1zM398 284v3h4v-3zM419 278h4v1h1v3h-1v1h-4v-1h-1v-3h1zM419 279v3h4v-3zM447 281h4v1h1v3h-1v1h-4v-1h-1v-3h1zM447 282v3h4v-3zM473 274h4v1h1v3h-1v1h-4v-1h-1v-3h1zM473 275v3h4v-3zM370 297h4v1h1v3h-1v1h-4v-1h-1v-3h1zM370 298v3h4v-3zM396 306h4v1h1v3h-1v1h-4v-1h-1v-3h1zM396 307v3h4v-3zM424 299h4v1h1v3h-1v1h-4v-1h-1v-3h1zM424 300v3h4v-3zM443 304h4v1h1v3h-1v1h-4v-1h-1v-3h1zM443 305v3h4v-3zM463 297h4v1h1v3h-1v1h-4v-1h-1v-3h1zM463 298v3h4v-3zM417 320h4v1h1v3h-1v1h-4v-1h-1v-3h1zM417 321v3h4v-3zM475 322h4v1h1v3h-1v1h-4v-1h-1v-3h1zM475 323v3h4v-3zM396 260h5v5h-5zM397 261v3h3v-3zM556 204h4v1h1v3h-1v1h-4v-1h-1v-3h1zM556 205v3h4v-3zM582 213h4v1h1v3h-1v1h-4v-1h-1v-3h1zM582 214v3h4v-3zM610 206h4v1h1v3h-1v1h-4v-1h-1v-3h1zM610 207v3h4v-3zM568 230h4v1h1v3h-1v1h-4v-1h-1v-3h1zM568 231v3h4v-3zM603 228h4v1h1v3h-1v1h-4v-1h-1v-3h1zM603 229v3h4v-3zM636 234h4v1h1v3h-1v1h-4v-1h-1v-3h1zM636 235v3h4v-3zM589 244h4v1h1v3h-1v1h-4v-1h-1v-3h1zM589 245v3h4v-3zM559 251h4v1h1v3h-1v1h-4v-1h-1v-3h1zM559 252v3h4v-3zM652 251h4v1h1v3h-1v1h-4v-1h-1v-3h1zM652 252v3h4v-3zM582 260h4v1h1v3h-1v1h-4v-1h-1v-3h1zM582 261v3h4v-3zM610 255h4v1h1v3h-1v1h-4v-1h-1v-3h1zM610 256v3h4v-3zM633 258h4v1h1v3h-1v1h-4v-1h-1v-3h1zM633 259v3h4v-3zM605 278h4v1h1v3h-1v1h-4v-1h-1v-3h1zM605 279v3h4v-3zM633 281h4v1h1v3h-1v1h-4v-1h-1v-3h1zM633 282v3h4v-3zM659 274h4v1h1v3h-1v1h-4v-1h-1v-3h1zM659 275v3h4v-3zM629 304h4v1h1v3h-1v1h-4v-1h-1v-3h1zM629 305v3h4v-3zM649 297h4v1h1v3h-1v1h-4v-1h-1v-3h1zM649 298v3h4v-3zM661 322h4v1h1v3h-1v1h-4v-1h-1v-3h1zM661 323v3h4v-3zM450 327h4v1h1v3h-1v1h-4v-1h-1v-3h1zM450 328v3h4v-3zM424 348h4v1h1v3h-1v1h-4v-1h-1v-3h1zM424 349v3h4v-3zM447 350h4v1h1v3h-1v1h-4v-1h-1v-3h1zM447 351v3h4v-3zM466 344h4v1h1v3h-1v1h-4v-1h-1v-3h1zM466 345v3h4v-3zM489 353h4v1h1v3h-1v1h-4v-1h-1v-3h1zM489 354v3h4v-3zM473 367h4v1h1v3h-1v1h-4v-1h-1v-3h1zM473 368v3h4v-3zM447 374h4v1h1v3h-1v1h-4v-1h-1v-3h1zM447 375v3h4v-3zM463 390h4v1h1v3h-1v1h-4v-1h-1v-3h1zM463 391v3h4v-3zM443 397h4v1h1v3h-1v1h-4v-1h-1v-3h1zM443 398v3h4v-3zM489 399h4v1h1v3h-1v1h-4v-1h-1v-3h1zM489 400v3h4v-3zM450 420h4v1h1v3h-1v1h-4v-1h-1v-3h1zM450 421v3h4v-3zM475 415h4v1h1v3h-1v1h-4v-1h-1v-3h1zM475 416v3h4v-3zM496 430h4v1h1v3h-1v1h-4v-1h-1v-3h1zM496 431v3h4v-3zM466 437h4v1h1v3h-1v1h-4v-1h-1v-3h1zM466 438v3h4v-3zM447 444h4v1h1v3h-1v1h-4v-1h-1v-3h1zM447 445v3h4v-3zM489 446h4v1h1v3h-1v1h-4v-1h-1v-3h1zM489 447v3h4v-3zM473 460h4v1h1v3h-1v1h-4v-1h-1v-3h1zM473 461v3h4v-3zM491 376h5v5h-5zM492 377v3h3v-3zM635 327h4v1h1v3h-1v1h-4v-1h-1v-3h1zM635 328v3h4v-3zM633 350h4v1h1v3h-1v1h-4v-1h-1v-3h1zM633 351v3h4v-3zM652 344h4v1h1v3h-1v1h-4v-1h-1v-3h1zM652 345v3h4v-3zM659 367h4v1h1v3h-1v1h-4v-1h-1v-3h1zM659 368v3h4v-3zM633 374h4v1h1v3h-1v1h-4v-1h-1v-3h1zM633 375v3h4v-3zM677 376h4v1h1v3h-1v1h-4v-1h-1v-3h1zM677 377v3h4v-3zM610 392h4v1h1v3h-1v1h-4v-1h-1v-3h1zM610 393v3h4v-3zM629 397h4v1h1v3h-1v1h-4v-1h-1v-3h1zM629 398v3h4v-3zM649 390h4v1h1v3h-1v1h-4v-1h-1v-3h1zM649 391v3h4v-3zM675 399h4v1h1v3h-1v1h-4v-1h-1v-3h1zM675 400v3h4v-3zM702 392h4v1h1v3h-1v1h-4v-1h-1v-3h1zM702 393v3h4v-3zM603 413h4v1h1v3h-1v1h-4v-1h-1v-3h1zM603 414v3h4v-3zM635 420h4v1h1v3h-1v1h-4v-1h-1v-3h1zM635 421v3h4v-3zM661 415h4v1h1v3h-1v1h-4v-1h-1v-3h1zM661 416v3h4v-3zM695 413h4v1h1v3h-1v1h-4v-1h-1v-3h1zM695 414v3h4v-3zM729 420h4v1h1v3h-1v1h-4v-1h-1v-3h1zM729 421v3h4v-3zM589 429h4v1h1v3h-1v1h-4v-1h-1v-3h1zM589 430v3h4v-3zM682 429h4v1h1v3h-1v1h-4v-1h-1v-3h1zM682 430v3h4v-3zM610 441h4v1h1v3h-1v1h-4v-1h-1v-3h1zM610 442v3h4v-3zM633 444h4v1h1v3h-1v1h-4v-1h-1v-3h1zM633 445v3h4v-3zM652 437h4v1h1v3h-1v1h-4v-1h-1v-3h1zM652 438v3h4v-3zM675 446h4v1h1v3h-1v1h-4v-1h-1v-3h1zM675 447v3h4v-3zM726 444h4v1h1v3h-1v1h-4v-1h-1v-3h1zM726 445v3h4v-3zM582 446h4v1h1v3h-1v1h-4v-1h-1v-3h1zM582 447v3h4v-3zM566 460h4v1h1v3h-1v1h-4v-1h-1v-3h1zM566 461v3h4v-3zM659 460h4v1h1v3h-1v1h-4v-1h-1v-3h1zM659 461v3h4v-3zM702 441h5v5h-5zM703 442v3h3v-3zM754 415h4v1h1v3h-1v1h-4v-1h-1v-3h1zM754 416v3h4v-3zM775 429h4v1h1v3h-1v1h-4v-1h-1v-3h1zM775 430v3h4v-3zM745 436h4v1h1v3h-1v1h-4v-1h-1v-3h1zM745 437v3h4v-3zM768 446h4v1h1v3h-1v1h-4v-1h-1v-3h1zM768 447v3h4v-3zM818 444h4v1h1v3h-1v1h-4v-1h-1v-3h1zM818 445v3h4v-3zM838 436h4v1h1v3h-1v1h-4v-1h-1v-3h1zM838 437v3h4v-3zM861 446h4v1h1v3h-1v1h-4v-1h-1v-3h1zM861 447v3h4v-3zM752 460h4v1h1v3h-1v1h-4v-1h-1v-3h1zM752 461v3h4v-3zM770 469h4v1h1v3h-1v1h-4v-1h-1v-3h1zM770 470v3h4v-3zM791 464h4v1h1v3h-1v1h-4v-1h-1v-3h1zM791 465v3h4v-3zM818 467h4v1h1v3h-1v1h-4v-1h-1v-3h1zM818 468v3h4v-3zM845 460h4v1h1v3h-1v1h-4v-1h-1v-3h1zM845 461v3h4v-3zM863 469h4v1h1v3h-1v1h-4v-1h-1v-3h1zM863 470v3h4v-3zM884 464h4v1h1v3h-1v1h-4v-1h-1v-3h1zM884 465v3h4v-3zM795 485h4v1h1v3h-1v1h-4v-1h-1v-3h1zM795 486v3h4v-3zM814 490h4v1h1v3h-1v1h-4v-1h-1v-3h1zM814 491v3h4v-3zM835 483h4v1h1v3h-1v1h-4v-1h-1v-3h1zM835 484v3h4v-3zM861 492h4v1h1v3h-1v1h-4v-1h-1v-3h1zM861 493v3h4v-3zM888 485h4v1h1v3h-1v1h-4v-1h-1v-3h1zM888 486v3h4v-3zM795 441h5v5h-5zM796 442v3h3v-3zM447 467h4v1h1v3h-1v1h-4v-1h-1v-3h1zM447 468v3h4v-3zM512 464h4v1h1v3h-1v1h-4v-1h-1v-3h1zM512 465v3h4v-3zM540 467h4v1h1v3h-1v1h-4v-1h-1v-3h1zM540 468v3h4v-3zM443 490h4v1h1v3h-1v1h-4v-1h-1v-3h1zM443 491v3h4v-3zM463 483h4v1h1v3h-1v1h-4v-1h-1v-3h1zM463 484v3h4v-3zM489 492h4v1h1v3h-1v1h-4v-1h-1v-3h1zM489 493v3h4v-3zM516 485h4v1h1v3h-1v1h-4v-1h-1v-3h1zM516 486v3h4v-3zM536 490h4v1h1v3h-1v1h-4v-1h-1v-3h1zM536 491v3h4v-3zM556 483h4v1h1v3h-1v1h-4v-1h-1v-3h1zM556 484v3h4v-3zM582 492h4v1h1v3h-1v1h-4v-1h-1v-3h1zM582 493v3h4v-3zM449 513h4v1h1v3h-1v1h-4v-1h-1v-3h1zM449 514v3h4v-3zM475 508h4v1h1v3h-1v1h-4v-1h-1v-3h1zM475 509v3h4v-3zM510 506h4v1h1v3h-1v1h-4v-1h-1v-3h1zM510 507v3h4v-3zM543 513h4v1h1v3h-1v1h-4v-1h-1v-3h1zM543 514v3h4v-3zM568 508h4v1h1v3h-1v1h-4v-1h-1v-3h1zM568 509v3h4v-3zM496 522h4v1h1v3h-1v1h-4v-1h-1v-3h1zM496 523v3h4v-3zM589 522h4v1h1v3h-1v1h-4v-1h-1v-3h1zM589 523v3h4v-3zM424 534h4v1h1v3h-1v1h-4v-1h-1v-3h1zM424 535v3h4v-3zM447 536h4v1h1v3h-1v1h-4v-1h-1v-3h1zM447 537v3h4v-3zM466 530h4v1h1v3h-1v1h-4v-1h-1v-3h1zM466 531v3h4v-3zM489 539h4v1h1v3h-1v1h-4v-1h-1v-3h1zM489 540v3h4v-3zM517 534h4v1h1v3h-1v1h-4v-1h-1v-3h1zM517 535v3h4v-3zM540 536h4v1h1v3h-1v1h-4v-1h-1v-3h1zM540 537v3h4v-3zM559 530h4v1h1v3h-1v1h-4v-1h-1v-3h1zM559 531v3h4v-3zM582 539h4v1h1v3h-1v1h-4v-1h-1v-3h1zM582 540v3h4v-3zM447 559h4v1h1v3h-1v1h-4v-1h-1v-3h1zM447 560v3h4v-3zM473 553h4v1h1v3h-1v1h-4v-1h-1v-3h1zM473 554v3h4v-3zM566 553h4v1h1v3h-1v1h-4v-1h-1v-3h1zM566 554v3h4v-3zM491 469h5v5h-5zM492 470v3h3v-3zM584 469h5v5h-5zM585 470v3h3v-3zM419 557h5v5h-5zM420 558v3h3v-3zM491 562h5v5h-5zM492 563v3h3v-3zM512 557h5v5h-5zM513 558v3h3v-3zM606 464h4v1h1v3h-1v1h-4v-1h-1v-3h1zM606 465v3h4v-3zM633 467h4v1h1v3h-1v1h-4v-1h-1v-3h1zM633 468v3h4v-3zM677 469h4v1h1v3h-1v1h-4v-1h-1v-3h1zM677 470v3h4v-3zM698 464h4v1h1v3h-1v1h-4v-1h-1v-3h1zM698 465v3h4v-3zM726 467h4v1h1v3h-1v1h-4v-1h-1v-3h1zM726 468v3h4v-3zM610 485h4v1h1v3h-1v1h-4v-1h-1v-3h1zM610 486v3h4v-3zM629 490h4v1h1v3h-1v1h-4v-1h-1v-3h1zM629 491v3h4v-3zM649 483h4v1h1v3h-1v1h-4v-1h-1v-3h1zM649 484v3h4v-3zM675 492h4v1h1v3h-1v1h-4v-1h-1v-3h1zM675 493v3h4v-3zM603 506h4v1h1v3h-1v1h-4v-1h-1v-3h1zM603 507v3h4v-3zM635 513h4v1h1v3h-1v1h-4v-1h-1v-3h1zM635 514v3h4v-3zM661 508h4v1h1v3h-1v1h-4v-1h-1v-3h1zM661 509v3h4v-3zM610 534h4v1h1v3h-1v1h-4v-1h-1v-3h1zM610 535v3h4v-3zM633 536h4v1h1v3h-1v1h-4v-1h-1v-3h1zM633 537v3h4v-3zM652 530h4v1h1v3h-1v1h-4v-1h-1v-3h1zM652 531v3h4v-3zM659 553h4v1h1v3h-1v1h-4v-1h-1v-3h1zM659 554v3h4v-3zM633 559h4v1h1v3h-1v1h-4v-1h-1v-3h1zM633 560v3h4v-3zM677 562h4v1h1v3h-1v1h-4v-1h-1v-3h1zM677 563v3h4v-3zM649 576h4v1h1v3h-1v1h-4v-1h-1v-3h1zM649 577v3h4v-3zM675 585h4v1h1v3h-1v1h-4v-1h-1v-3h1zM675 586v3h4v-3zM661 601h4v1h1v3h-1v1h-4v-1h-1v-3h1zM661 602v3h4v-3zM696 599h4v1h1v3h-1v1h-4v-1h-1v-3h1zM696 600v3h4v-3zM847 508h4v1h1v3h-1v1h-4v-1h-1v-3h1zM847 509v3h4v-3zM881 506h4v1h1v3h-1v1h-4v-1h-1v-3h1zM881 507v3h4v-3zM868 522h4v1h1v3h-1v1h-4v-1h-1v-3h1zM868 523v3h4v-3zM912 537h4v1h1v3h-1v1h-4v-1h-1v-3h1zM912 538v3h4v-3zM861 539h4v1h1v3h-1v1h-4v-1h-1v-3h1zM861 540v3h4v-3zM863 562h4v1h1v3h-1v1h-4v-1h-1v-3h1zM863 563v3h4v-3zM912 560h4v1h1v3h-1v1h-4v-1h-1v-3h1zM912 561v3h4v-3zM888 578h4v1h1v3h-1v1h-4v-1h-1v-3h1zM888 579v3h4v-3zM861 585h4v1h1v3h-1v1h-4v-1h-1v-3h1zM861 586v3h4v-3zM847 602h4v1h1v3h-1v1h-4v-1h-1v-3h1zM847 603v3h4v-3zM881 599h4v1h1v3h-1v1h-4v-1h-1v-3h1zM881 600v3h4v-3zM915 606h4v1h1v3h-1v1h-4v-1h-1v-3h1zM915 607v3h4v-3zM868 615h4v1h1v3h-1v1h-4v-1h-1v-3h1zM868 616v3h4v-3zM838 622h4v1h1v3h-1v1h-4v-1h-1v-3h1zM838 623v3h4v-3zM819 629h4v1h1v3h-1v1h-4v-1h-1v-3h1zM819 630v3h4v-3zM861 631h4v1h1v3h-1v1h-4v-1h-1v-3h1zM861 632v3h4v-3zM888 534h5v5h-5zM889 535v3h3v-3zM884 557h5v5h-5zM885 558v3h3v-3zM907 583h5v5h-5zM908 584v3h3v-3zM795 627h5v5h-5zM796 628v3h3v-3zM888 627h5v5h-5zM889 628v3h3v-3zM682 615h4v1h1v3h-1v1h-4v-1h-1v-3h1zM682 616v3h4v-3zM652 623h4v1h1v3h-1v1h-4v-1h-1v-3h1zM652 624v3h4v-3zM675 631h4v1h1v3h-1v1h-4v-1h-1v-3h1zM675 632v3h4v-3zM726 629h4v1h1v3h-1v1h-4v-1h-1v-3h1zM726 630v3h4v-3zM659 646h4v1h1v3h-1v1h-4v-1h-1v-3h1zM659 647v3h4v-3zM677 655h4v1h1v3h-1v1h-4v-1h-1v-3h1zM677 656v3h4v-3zM726 653h4v1h1v3h-1v1h-4v-1h-1v-3h1zM726 654v3h4v-3zM752 646h4v1h1v3h-1v1h-4v-1h-1v-3h1zM752 647v3h4v-3zM770 655h4v1h1v3h-1v1h-4v-1h-1v-3h1zM770 656v3h4v-3zM818 653h4v1h1v3h-1v1h-4v-1h-1v-3h1zM818 654v3h4v-3zM675 678h4v1h1v3h-1v1h-4v-1h-1v-3h1zM675 679v3h4v-3zM702 671h4v1h1v3h-1v1h-4v-1h-1v-3h1zM702 672v3h4v-3zM742 669h4v1h1v3h-1v1h-4v-1h-1v-3h1zM742 670v3h4v-3zM768 678h4v1h1v3h-1v1h-4v-1h-1v-3h1zM768 679v3h4v-3zM795 671h4v1h1v3h-1v1h-4v-1h-1v-3h1zM795 672v3h4v-3zM696 692h4v1h1v3h-1v1h-4v-1h-1v-3h1zM696 693v3h4v-3zM728 699h4v1h1v3h-1v1h-4v-1h-1v-3h1zM728 700v3h4v-3zM754 694h4v1h1v3h-1v1h-4v-1h-1v-3h1zM754 695v3h4v-3zM789 692h4v1h1v3h-1v1h-4v-1h-1v-3h1zM789 693v3h4v-3zM745 715h4v1h1v3h-1v1h-4v-1h-1v-3h1zM745 716v3h4v-3zM775 708h4v1h1v3h-1v1h-4v-1h-1v-3h1zM775 709v3h4v-3zM702 627h5v5h-5zM703 628v3h3v-3zM698 650h5v5h-5zM699 651v3h3v-3zM791 650h5v5h-5zM792 651v3h3v-3zM721 676h5v5h-5zM722 677v3h3v-3zM814 676h5v5h-5zM815 677v3h3v-3zM845 646h4v1h1v3h-1v1h-4v-1h-1v-3h1zM845 647v3h4v-3zM863 655h4v1h1v3h-1v1h-4v-1h-1v-3h1zM863 656v3h4v-3zM835 669h4v1h1v3h-1v1h-4v-1h-1v-3h1zM835 670v3h4v-3zM861 678h4v1h1v3h-1v1h-4v-1h-1v-3h1zM861 679v3h4v-3zM821 699h4v1h1v3h-1v1h-4v-1h-1v-3h1zM821 700v3h4v-3zM884 650h5v5h-5zM885 651v3h3v-3z" fill="#000" fill-rule="evenodd" shape-rendering="crispEdges"/><g fill="none" stroke="#000" stroke-width="1.6" opacity="0.35"><rect x="446.5" y="188.5" width="5" height="4" rx="1.5"/><rect x="490.5" y="190.5" width="5" height="4" rx="1.5"/><rect x="511.5" y="186.5" width="5" height="4" rx="1.5"/><rect x="423.5" y="206.5" width="5" height="4" rx="1.5"/><rect x="395.5" y="213.5" width="5" height="4" rx="1.5"/><rect x="442.5" y="211.5" width="5" height="4" rx="1.5"/><rect x="462.5" y="204.5" width="5" height="4" rx="1.5"/><rect x="488.5" y="213.5" width="5" height="4" rx="1.5"/><rect x="516.5" y="206.5" width="5" height="4" rx="1.5"/><rect x="535.5" y="211.5" width="5" height="4" rx="1.5"/><rect x="381.5" y="230.5" width="5" height="4" rx="1.5"/><rect x="416.5" y="228.5" width="5" height="4" rx="1.5"/><rect x="449.5" y="234.5" width="5" height="4" rx="1.5"/><rect x="474.5" y="230.5" width="5" height="4" rx="1.5"/><rect x="508.5" y="228.5" width="5" height="4" rx="1.5"/><rect x="542.5" y="234.5" width="5" height="4" rx="1.5"/><rect x="402.5" y="244.5" width="5" height="4" rx="1.5"/><rect x="495.5" y="244.5" width="5" height="4" rx="1.5"/><rect x="372.5" y="251.5" width="5" height="4" rx="1.5"/><rect x="423.5" y="255.5" width="5" height="4" rx="1.5"/><rect x="446.5" y="258.5" width="5" height="4" rx="1.5"/><rect x="465.5" y="251.5" width="5" height="4" rx="1.5"/><rect x="488.5" y="260.5" width="5" height="4" rx="1.5"/><rect x="516.5" y="255.5" width="5" height="4" rx="1.5"/><rect x="539.5" y="258.5" width="5" height="4" rx="1.5"/><rect x="379.5" y="274.5" width="5" height="4" rx="1.5"/><rect x="397.5" y="283.5" width="5" height="4" rx="1.5"/><rect x="418.5" y="278.5" width="5" height="4" rx="1.5"/><rect x="446.5" y="281.5" width="5" height="4" rx="1.5"/><rect x="472.5" y="274.5" width="5" height="4" rx="1.5"/><rect x="369.5" y="297.5" width="5" height="4" rx="1.5"/><rect x="395.5" y="306.5" width="5" height="4" rx="1.5"/><rect x="423.5" y="299.5" width="5" height="4" rx="1.5"/><rect x="442.5" y="304.5" width="5" height="4" rx="1.5"/><rect x="462.5" y="297.5" width="5" height="4" rx="1.5"/><rect x="416.5" y="320.5" width="5" height="4" rx="1.5"/><rect x="474.5" y="322.5" width="5" height="4" rx="1.5"/><rect x="396.5" y="260.5" width="4" height="4"/><rect x="555.5" y="204.5" width="5" height="4" rx="1.5"/><rect x="581.5" y="213.5" width="5" height="4" rx="1.5"/><rect x="609.5" y="206.5" width="5" height="4" rx="1.5"/><rect x="567.5" y="230.5" width="5" height="4" rx="1.5"/><rect x="602.5" y="228.5" width="5" height="4" rx="1.5"/><rect x="635.5" y="234.5" width="5" height="4" rx="1.5"/><rect x="588.5" y="244.5" width="5" height="4" rx="1.5"/><rect x="558.5" y="251.5" width="5" height="4" rx="1.5"/><rect x="651.5" y="251.5" width="5" height="4" rx="1.5"/><rect x="581.5" y="260.5" width="5" height="4" rx="1.5"/><rect x="609.5" y="255.5" width="5" height="4" rx="1.5"/><rect x="632.5" y="258.5" width="5" height="4" rx="1.5"/><rect x="604.5" y="278.5" width="5" height="4" rx="1.5"/><rect x="632.5" y="281.5" width="5" height="4" rx="1.5"/><rect x="658.5" y="274.5" width="5" height="4" rx="1.5"/><rect x="628.5" y="304.5" width="5" height="4" rx="1.5"/><rect x="648.5" y="297.5" width="5" height="4" rx="1.5"/><rect x="660.5" y="322.5" width="5" height="4" rx="1.5"/><rect x="449.5" y="327.5" width="5" height="4" rx="1.5"/><rect x="423.5" y="348.5" width="5" height="4" rx="1.5"/><rect x="446.5" y="350.5" width="5" height="4" rx="1.5"/><rect x="465.5" y="344.5" width="5" height="4" rx="1.5"/><rect x="488.5" y="353.5" width="5" height="4" rx="1.5"/><rect x="472.5" y="367.5" width="5" height="4" rx="1.5"/><rect x="446.5" y="374.5" width="5" height="4" rx="1.5"/><rect x="462.5" y="390.5" width="5" height="4" rx="1.5"/><rect x="442.5" y="397.5" width="5" height="4" rx="1.5"/><rect x="488.5" y="399.5" width="5" height="4" rx="1.5"/><rect x="449.5" y="420.5" width="5" height="4" rx="1.5"/><rect x="474.5" y="415.5" width="5" height="4" rx="1.5"/><rect x="495.5" y="430.5" width="5" height="4" rx="1.5"/><rect x="465.5" y="437.5" width="5" height="4" rx="1.5"/><rect x="446.5" y="444.5" width="5" height="4" rx="1.5"/><rect x="488.5" y="446.5" width="5" height="4" rx="1.5"/><rect x="472.5" y="460.5" width="5" height="4" rx="1.5"/><rect x="491.5" y="376.5" width="4" height="4"/><rect x="634.5" y="327.5" width="5" height="4" rx="1.5"/><rect x="632.5" y="350.5" width="5" height="4" rx="1.5"/><rect x="651.5" y="344.5" width="5" height="4" rx="1.5"/><rect x="658.5" y="367.5" width="5" height="4" rx="1.5"/><rect x="632.5" y="374.5" width="5" height="4" rx="1.5"/><rect x="676.5" y="376.5" width="5" height="4" rx="1.5"/><rect x="609.5" y="392.5" width="5" height="4" rx="1.5"/><rect x="628.5" y="397.5" width="5" height="4" rx="1.5"/><rect x="648.5" y="390.5" width="5" height="4" rx="1.5"/><rect x="674.5" y="399.5" width="5" height="4" rx="1.5"/><rect x="701.5" y="392.5" width="5" height="4" rx="1.5"/><rect x="602.5" y="413.5" width="5" height="4" rx="1.5"/><rect x="634.5" y="420.5" width="5" height="4" rx="1.5"/><rect x="660.5" y="415.5" width="5" height="4" rx="1.5"/><rect x="694.5" y="413.5" width="5" height="4" rx="1.5"/><rect x="728.5" y="420.5" width="5" height="4" rx="1.5"/><rect x="588.5" y="429.5" width="5" height="4" rx="1.5"/><rect x="681.5" y="429.5" width="5" height="4" rx="1.5"/><rect x="609.5" y="441.5" width="5" height="4" rx="1.5"/><rect x="632.5" y="444.5" width="5" height="4" rx="1.5"/><rect x="651.5" y="437.5" width="5" height="4" rx="1.5"/><rect x="674.5" y="446.5" width="5" height="4" rx="1.5"/><rect x="725.5" y="444.5" width="5" height="4" rx="1.5"/><rect x="581.5" y="446.5" width="5" height="4" rx="1.5"/><rect x="565.5" y="460.5" width="5" height="4" rx="1.5"/><rect x="658.5" y="460.5" width="5" height="4" rx="1.5"/><rect x="702.5" y="441.5" width="4" height="4"/><rect x="753.5" y="415.5" width="5" height="4" rx="1.5"/><rect x="774.5" y="429.5" width="5" height="4" rx="1.5"/><rect x="744.5" y="436.5" width="5" height="4" rx="1.5"/><rect x="767.5" y="446.5" width="5" height="4" rx="1.5"/><rect x="817.5" y="444.5" width="5" height="4" rx="1.5"/><rect x="837.5" y="436.5" width="5" height="4" rx="1.5"/><rect x="860.5" y="446.5" width="5" height="4" rx="1.5"/><rect x="751.5" y="460.5" width="5" height="4" rx="1.5"/><rect x="769.5" y="469.5" width="5" height="4" rx="1.5"/><rect x="790.5" y="464.5" width="5" height="4" rx="1.5"/><rect x="817.5" y="467.5" width="5" height="4" rx="1.5"/><rect x="844.5" y="460.5" width="5" height="4" rx="1.5"/><rect x="862.5" y="469.5" width="5" height="4" rx="1.5"/><rect x="883.5" y="464.5" width="5" height="4" rx="1.5"/><rect x="794.5" y="485.5" width="5" height="4" rx="1.5"/><rect x="813.5" y="490.5" width="5" height="4" rx="1.5"/><rect x="834.5" y="483.5" width="5" height="4" rx="1.5"/><rect x="860.5" y="492.5" width="5" height="4" rx="1.5"/><rect x="887.5" y="485.5" width="5" height="4" rx="1.5"/><rect x="795.5" y="441.5" width="4" height="4"/><rect x="446.5" y="467.5" width="5" height="4" rx="1.5"/><rect x="511.5" y="464.5" width="5" height="4" rx="1.5"/><rect x="539.5" y="467.5" width="5" height="4" rx="1.5"/><rect x="442.5" y="490.5" width="5" height="4" rx="1.5"/><rect x="462.5" y="483.5" width="5" height="4" rx="1.5"/><rect x="488.5" y="492.5" width="5" height="4" rx="1.5"/><rect x="515.5" y="485.5" width="5" height="4" rx="1.5"/><rect x="535.5" y="490.5" width="5" height="4" rx="1.5"/><rect x="555.5" y="483.5" width="5" height="4" rx="1.5"/><rect x="581.5" y="492.5" width="5" height="4" rx="1.5"/><rect x="448.5" y="513.5" width="5" height="4" rx="1.5"/><rect x="474.5" y="508.5" width="5" height="4" rx="1.5"/><rect x="509.5" y="506.5" width="5" height="4" rx="1.5"/><rect x="542.5" y="513.5" width="5" height="4" rx="1.5"/><rect x="567.5" y="508.5" width="5" height="4" rx="1.5"/><rect x="495.5" y="522.5" width="5" height="4" rx="1.5"/><rect x="588.5" y="522.5" width="5" height="4" rx="1.5"/><rect x="423.5" y="534.5" width="5" height="4" rx="1.5"/><rect x="446.5" y="536.5" width="5" height="4" rx="1.5"/><rect x="465.5" y="530.5" width="5" height="4" rx="1.5"/><rect x="488.5" y="539.5" width="5" height="4" rx="1.5"/><rect x="516.5" y="534.5" width="5" height="4" rx="1.5"/><rect x="539.5" y="536.5" width="5" height="4" rx="1.5"/><rect x="558.5" y="530.5" width="5" height="4" rx="1.5"/><rect x="581.5" y="539.5" width="5" height="4" rx="1.5"/><rect x="446.5" y="559.5" width="5" height="4" rx="1.5"/><rect x="472.5" y="553.5" width="5" height="4" rx="1.5"/><rect x="565.5" y="553.5" width="5" height="4" rx="1.5"/><rect x="491.5" y="469.5" width="4" height="4"/><rect x="584.5" y="469.5" width="4" height="4"/><rect x="419.5" y="557.5" width="4" height="4"/><rect x="491.5" y="562.5" width="4" height="4"/><rect x="512.5" y="557.5" width="4" height="4"/><rect x="605.5" y="464.5" width="5" height="4" rx="1.5"/><rect x="632.5" y="467.5" width="5" height="4" rx="1.5"/><rect x="676.5" y="469.5" width="5" height="4" rx="1.5"/><rect x="697.5" y="464.5" width="5" height="4" rx="1.5"/><rect x="725.5" y="467.5" width="5" height="4" rx="1.5"/><rect x="609.5" y="485.5" width="5" height="4" rx="1.5"/><rect x="628.5" y="490.5" width="5" height="4" rx="1.5"/><rect x="648.5" y="483.5" width="5" height="4" rx="1.5"/><rect x="674.5" y="492.5" width="5" height="4" rx="1.5"/><rect x="602.5" y="506.5" width="5" height="4" rx="1.5"/><rect x="634.5" y="513.5" width="5" height="4" rx="1.5"/><rect x="660.5" y="508.5" width="5" height="4" rx="1.5"/><rect x="609.5" y="534.5" width="5" height="4" rx="1.5"/><rect x="632.5" y="536.5" width="5" height="4" rx="1.5"/><rect x="651.5" y="530.5" width="5" height="4" rx="1.5"/><rect x="658.5" y="553.5" width="5" height="4" rx="1.5"/><rect x="632.5" y="559.5" width="5" height="4" rx="1.5"/><rect x="676.5" y="562.5" width="5" height="4" rx="1.5"/><rect x="648.5" y="576.5" width="5" height="4" rx="1.5"/><rect x="674.5" y="585.5" width="5" height="4" rx="1.5"/><rect x="660.5" y="601.5" width="5" height="4" rx="1.5"/><rect x="695.5" y="599.5" width="5" height="4" rx="1.5"/><rect x="846.5" y="508.5" width="5" height="4" rx="1.5"/><rect x="880.5" y="506.5" width="5" height="4" rx="1.5"/><rect x="867.5" y="522.5" width="5" height="4" rx="1.5"/><rect x="911.5" y="537.5" width="5" height="4" rx="1.5"/><rect x="860.5" y="539.5" width="5" height="4" rx="1.5"/><rect x="862.5" y="562.5" width="5" height="4" rx="1.5"/><rect x="911.5" y="560.5" width="5" height="4" rx="1.5"/><rect x="887.5" y="578.5" width="5" height="4" rx="1.5"/><rect x="860.5" y="585.5" width="5" height="4" rx="1.5"/><rect x="846.5" y="602.5" width="5" height="4" rx="1.5"/><rect x="880.5" y="599.5" width="5" height="4" rx="1.5"/><rect x="914.5" y="606.5" width="5" height="4" rx="1.5"/><rect x="867.5" y="615.5" width="5" height="4" rx="1.5"/><rect x="837.5" y="622.5" width="5" height="4" rx="1.5"/><rect x="818.5" y="629.5" width="5" height="4" rx="1.5"/><rect x="860.5" y="631.5" width="5" height="4" rx="1.5"/><rect x="888.5" y="534.5" width="4" height="4"/><rect x="884.5" y="557.5" width="4" height="4"/><rect x="907.5" y="583.5" width="4" height="4"/><rect x="795.5" y="627.5" width="4" height="4"/><rect x="888.5" y="627.5" width="4" height="4"/><rect x="681.5" y="615.5" width="5" height="4" rx="1.5"/><rect x="651.5" y="623.5" width="5" height="4" rx="1.5"/><rect x="674.5" y="631.5" width="5" height="4" rx="1.5"/><rect x="725.5" y="629.5" width="5" height="4" rx="1.5"/><rect x="658.5" y="646.5" width="5" height="4" rx="1.5"/><rect x="676.5" y="655.5" width="5" height="4" rx="1.5"/><rect x="725.5" y="653.5" width="5" height="4" rx="1.5"/><rect x="751.5" y="646.5" width="5" height="4" rx="1.5"/><rect x="769.5" y="655.5" width="5" height="4" rx="1.5"/><rect x="817.5" y="653.5" width="5" height="4" rx="1.5"/><rect x="674.5" y="678.5" width="5" height="4" rx="1.5"/><rect x="701.5" y="671.5" width="5" height="4" rx="1.5"/><rect x="741.5" y="669.5" width="5" height="4" rx="1.5"/><rect x="767.5" y="678.5" width="5" height="4" rx="1.5"/><rect x="794.5" y="671.5" width="5" height="4" rx="1.5"/><rect x="695.5" y="692.5" width="5" height="4" rx="1.5"/><rect x="727.5" y="699.5" width="5" height="4" rx="1.5"/><rect x="753.5" y="694.5" width="5" height="4" rx="1.5"/><rect x="788.5" y="692.5" width="5" height="4" rx="1.5"/><rect x="744.5" y="715.5" width="5" height="4" rx="1.5"/><rect x="774.5" y="708.5" width="5" height="4" rx="1.5"/><rect x="702.5" y="627.5" width="4" height="4"/><rect x="698.5" y="650.5" width="4" height="4"/><rect x="791.5" y="650.5" width="4" height="4"/><rect x="721.5" y="676.5" width="4" height="4"/><rect x="814.5" y="676.5" width="4" height="4"/><rect x="844.5" y="646.5" width="5" height="4" rx="1.5"/><rect x="862.5" y="655.5" width="5" height="4" rx="1.5"/><rect x="834.5" y="669.5" width="5" height="4" rx="1.5"/><rect x="860.5" y="678.5" width="5" height="4" rx="1.5"/><rect x="820.5" y="699.5" width="5" height="4" rx="1.5"/><rect x="884.5" y="650.5" width="4" height="4"/></g></svg></body></html>
